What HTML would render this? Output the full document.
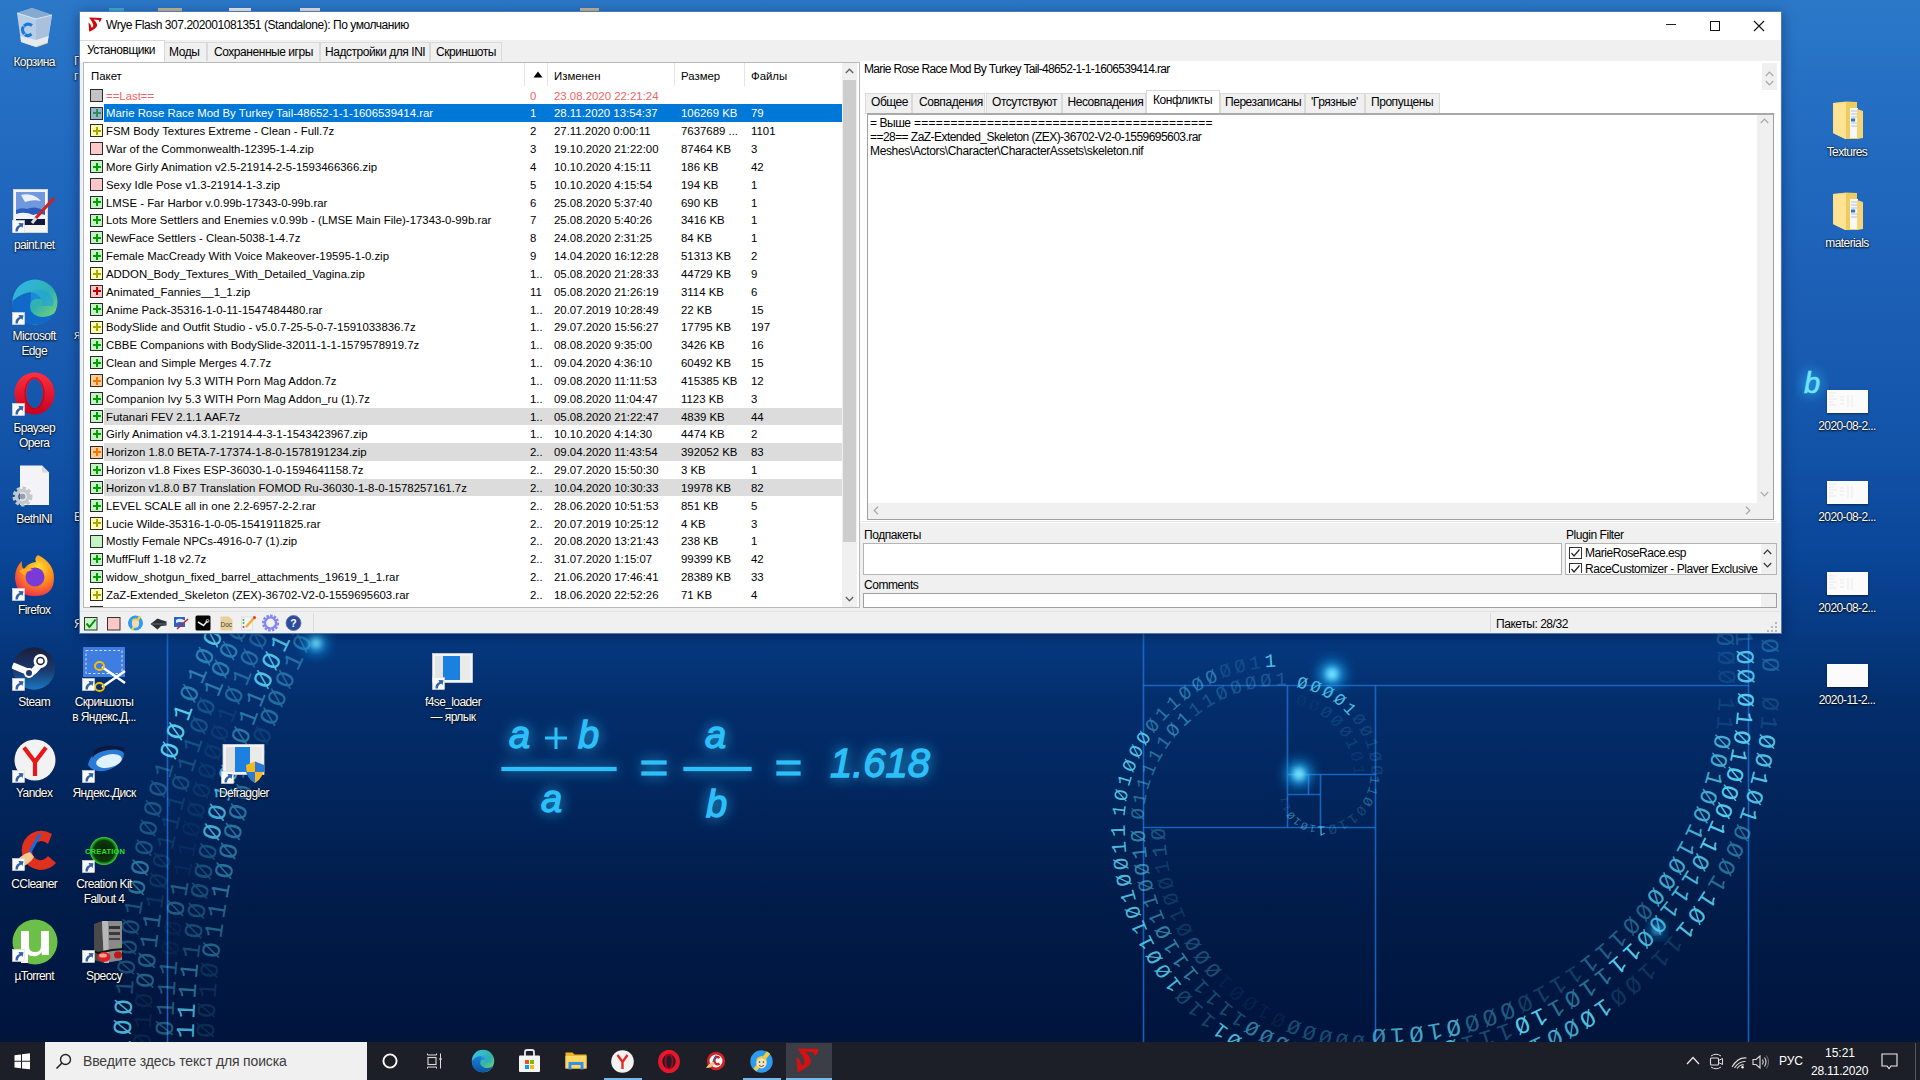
<!DOCTYPE html><html><head><meta charset="utf-8"><style>
*{margin:0;padding:0;box-sizing:border-box}
html,body{width:1920px;height:1080px;overflow:hidden;font-family:"Liberation Sans",sans-serif;}
body{position:relative;background:#0a3a8a;}
.a{position:absolute}
.t{position:absolute;white-space:pre;line-height:1}
#desk{position:absolute;left:0;top:0;width:1920px;height:1042px;
 background:linear-gradient(180deg,#2b78c9 0px,#216ac0 150px,#1b5fb5 300px,#1253a8 450px,#0a4699 550px,#073c86 620px,#032e6c 700px,#02255c 800px,#011c4a 900px,#00143c 1042px);}
.win{position:absolute;left:79px;top:11px;width:1702px;height:623px;background:#f0f0f0;border:1px solid #3c6fb0;}
.ui{font-size:12px;letter-spacing:-0.45px;color:#000}
.ls{font-size:11.4px;color:#000}
.lb{position:absolute;white-space:pre;line-height:1;font-size:12px;letter-spacing:-0.6px;color:#fff;text-align:center;text-shadow:0 0 2px rgba(0,0,0,0.9),0 1px 2px rgba(0,0,0,0.8)}
</style></head><body><div id="desk"></div><svg class="a" style="left:0;top:0" width="1920" height="1042" viewBox="0 0 1920 1042"><defs><filter id="gl" x="-50%" y="-50%" width="200%" height="200%"><feGaussianBlur stdDeviation="3"/></filter><filter id="gl2" x="-50%" y="-50%" width="200%" height="200%"><feGaussianBlur stdDeviation="7"/></filter></defs><path d="M167.5 630 L167.5 1042" stroke="#1f78e0" stroke-width="1.6" opacity="0.75"/><path d="M1143.5 630 L1143.5 1042" stroke="#1f78e0" stroke-width="1.6" opacity="0.75"/><path d="M1143 685.5 L1749 685.5" stroke="#1f78e0" stroke-width="1.6" opacity="0.75"/><path d="M1748.5 630 L1748.5 1042" stroke="#1f78e0" stroke-width="1.6" opacity="0.75"/><path d="M1375.5 685.5 L1375.5 1042" stroke="#1f78e0" stroke-width="1.6" opacity="0.75"/><path d="M1143 827.5 L1375.5 827.5" stroke="#1f78e0" stroke-width="1.6" opacity="0.75"/><path d="M1287.5 685.5 L1287.5 827.5" stroke="#1f78e0" stroke-width="1.6" opacity="0.75"/><path d="M1287.5 774.5 L1375.5 774.5" stroke="#1f78e0" stroke-width="1.6" opacity="0.75"/><path d="M1320.5 774.5 L1320.5 827.5" stroke="#1f78e0" stroke-width="1.6" opacity="0.75"/><path d="M1287.5 794.5 L1320.5 794.5" stroke="#1f78e0" stroke-width="1.6" opacity="0.75"/><path d="M1308.5 774.5 L1308.5 794.5" stroke="#1f78e0" stroke-width="1.6" opacity="0.75"/><path id="sp0" d="M122.0 1058.0 A1021.0 1021.0 0 0 1 1143.0 37.0" fill="none"/><text font-family="Liberation Mono" font-size="26" letter-spacing="4.5" fill="#5ad6f4" dy="8.6"><textPath href="#sp0" startOffset="3.0"><tspan fill-opacity="0.81">1</tspan><tspan fill-opacity="0.81">Ø</tspan><tspan fill-opacity="0.81">Ø</tspan><tspan fill-opacity="0.28">1</tspan><tspan fill-opacity="0.28">Ø</tspan><tspan fill-opacity="0.28">Ø</tspan><tspan fill-opacity="0.28">Ø</tspan><tspan fill-opacity="0.28">1</tspan><tspan fill-opacity="0.47">Ø</tspan><tspan fill-opacity="0.47">Ø</tspan><tspan fill-opacity="0.28">Ø</tspan><tspan fill-opacity="0.28">Ø</tspan><tspan fill-opacity="0.28">Ø</tspan><tspan fill-opacity="0.28">Ø</tspan><tspan fill-opacity="0.28">1</tspan><tspan fill-opacity="0.95">Ø</tspan><tspan fill-opacity="0.95">Ø</tspan><tspan fill-opacity="0.95">1</tspan><tspan fill-opacity="0.47">Ø</tspan><tspan fill-opacity="0.47">1</tspan><tspan fill-opacity="0.47">Ø</tspan><tspan fill-opacity="0.95">Ø</tspan><tspan fill-opacity="0.95">1</tspan><tspan fill-opacity="0.95">Ø</tspan><tspan fill-opacity="0.95">Ø</tspan><tspan fill-opacity="0.95">Ø</tspan><tspan fill-opacity="0.95">Ø</tspan><tspan fill-opacity="0.47">1</tspan><tspan fill-opacity="0.47">1</tspan><tspan fill-opacity="0.47">1</tspan><tspan fill-opacity="0.47">1</tspan><tspan fill-opacity="0.47">1</tspan><tspan fill-opacity="0.47">1</tspan><tspan fill-opacity="0.95">Ø</tspan><tspan fill-opacity="0.95">Ø</tspan><tspan fill-opacity="0.95">1</tspan><tspan fill-opacity="0.28">1</tspan><tspan fill-opacity="0.28">1</tspan><tspan fill-opacity="0.28">1</tspan><tspan fill-opacity="0.28">Ø</tspan><tspan fill-opacity="0.28">Ø</tspan><tspan fill-opacity="0.28">Ø</tspan><tspan fill-opacity="0.28">1</tspan><tspan fill-opacity="0.28">Ø</tspan><tspan fill-opacity="0.28">1</tspan><tspan fill-opacity="0.28">1</tspan><tspan fill-opacity="0.95">1</tspan><tspan fill-opacity="0.95">1</tspan><tspan fill-opacity="0.19">1</tspan><tspan fill-opacity="0.19">1</tspan><tspan fill-opacity="0.19">Ø</tspan><tspan fill-opacity="0.19">Ø</tspan><tspan fill-opacity="0.81">Ø</tspan><tspan fill-opacity="0.81">Ø</tspan><tspan fill-opacity="0.81">1</tspan><tspan fill-opacity="0.81">1</tspan><tspan fill-opacity="0.81">1</tspan><tspan fill-opacity="0.19">1</tspan><tspan fill-opacity="0.19">Ø</tspan><tspan fill-opacity="0.19">1</tspan><tspan fill-opacity="0.19">1</tspan><tspan fill-opacity="0.19">Ø</tspan><tspan fill-opacity="0.28">1</tspan><tspan fill-opacity="0.28">Ø</tspan><tspan fill-opacity="0.95">Ø</tspan><tspan fill-opacity="0.95">Ø</tspan><tspan fill-opacity="0.95">1</tspan><tspan fill-opacity="0.95">1</tspan><tspan fill-opacity="0.47">Ø</tspan><tspan fill-opacity="0.47">1</tspan><tspan fill-opacity="0.47">1</tspan><tspan fill-opacity="0.47">Ø</tspan><tspan fill-opacity="0.47">1</tspan><tspan fill-opacity="0.47">1</tspan><tspan fill-opacity="0.47">1</tspan><tspan fill-opacity="0.47">1</tspan><tspan fill-opacity="0.19">Ø</tspan><tspan fill-opacity="0.19">Ø</tspan><tspan fill-opacity="0.19">Ø</tspan><tspan fill-opacity="0.19">Ø</tspan></textPath></text><path id="sp1" d="M142.0 1058.0 A1001.0 1001.0 0 0 1 1143.0 57.0" fill="none"/><text font-family="Liberation Mono" font-size="26" letter-spacing="4.5" fill="#5ad6f4" dy="8.6"><textPath href="#sp1" startOffset="9.6"><tspan fill-opacity="0.09">Ø</tspan><tspan fill-opacity="0.09">1</tspan><tspan fill-opacity="0.09">Ø</tspan><tspan fill-opacity="0.38">Ø</tspan><tspan fill-opacity="0.38">Ø</tspan><tspan fill-opacity="0.38">1</tspan><tspan fill-opacity="0.38">1</tspan><tspan fill-opacity="0.14">1</tspan><tspan fill-opacity="0.14">Ø</tspan><tspan fill-opacity="0.14">Ø</tspan><tspan fill-opacity="0.14">1</tspan><tspan fill-opacity="0.14">1</tspan><tspan fill-opacity="0.14">1</tspan><tspan fill-opacity="0.23">Ø</tspan><tspan fill-opacity="0.23">1</tspan><tspan fill-opacity="0.23">1</tspan><tspan fill-opacity="0.23">Ø</tspan><tspan fill-opacity="0.23">Ø</tspan><tspan fill-opacity="0.45">1</tspan><tspan fill-opacity="0.45">Ø</tspan><tspan fill-opacity="0.45">Ø</tspan><tspan fill-opacity="0.38">Ø</tspan><tspan fill-opacity="0.38">Ø</tspan><tspan fill-opacity="0.38">Ø</tspan><tspan fill-opacity="0.38">Ø</tspan><tspan fill-opacity="0.38">Ø</tspan><tspan fill-opacity="0.38">1</tspan><tspan fill-opacity="0.14">Ø</tspan><tspan fill-opacity="0.14">Ø</tspan><tspan fill-opacity="0.14">Ø</tspan><tspan fill-opacity="0.14">1</tspan><tspan fill-opacity="0.14">1</tspan><tspan fill-opacity="0.14">1</tspan><tspan fill-opacity="0.14">1</tspan><tspan fill-opacity="0.45">1</tspan><tspan fill-opacity="0.45">1</tspan><tspan fill-opacity="0.23">1</tspan><tspan fill-opacity="0.23">Ø</tspan><tspan fill-opacity="0.23">Ø</tspan><tspan fill-opacity="0.23">Ø</tspan><tspan fill-opacity="0.23">1</tspan><tspan fill-opacity="0.09">1</tspan><tspan fill-opacity="0.09">Ø</tspan><tspan fill-opacity="0.09">Ø</tspan><tspan fill-opacity="0.09">Ø</tspan><tspan fill-opacity="0.14">Ø</tspan><tspan fill-opacity="0.14">Ø</tspan><tspan fill-opacity="0.14">1</tspan><tspan fill-opacity="0.14">Ø</tspan><tspan fill-opacity="0.09">1</tspan><tspan fill-opacity="0.09">Ø</tspan><tspan fill-opacity="0.09">1</tspan><tspan fill-opacity="0.09">Ø</tspan><tspan fill-opacity="0.14">1</tspan><tspan fill-opacity="0.14">Ø</tspan><tspan fill-opacity="0.14">Ø</tspan><tspan fill-opacity="0.14">Ø</tspan><tspan fill-opacity="0.14">1</tspan><tspan fill-opacity="0.14">Ø</tspan><tspan fill-opacity="0.45">1</tspan><tspan fill-opacity="0.45">1</tspan><tspan fill-opacity="0.45">Ø</tspan><tspan fill-opacity="0.45">Ø</tspan><tspan fill-opacity="0.45">1</tspan><tspan fill-opacity="0.45">1</tspan><tspan fill-opacity="0.38">1</tspan><tspan fill-opacity="0.38">1</tspan><tspan fill-opacity="0.38">1</tspan><tspan fill-opacity="0.38">Ø</tspan><tspan fill-opacity="0.38">Ø</tspan><tspan fill-opacity="0.45">Ø</tspan><tspan fill-opacity="0.45">1</tspan><tspan fill-opacity="0.45">Ø</tspan><tspan fill-opacity="0.45">1</tspan><tspan fill-opacity="0.45">Ø</tspan><tspan fill-opacity="0.23">Ø</tspan><tspan fill-opacity="0.23">Ø</tspan><tspan fill-opacity="0.23">1</tspan><tspan fill-opacity="0.23">Ø</tspan></textPath></text><path id="sp2" d="M164.0 1058.0 A979.0 979.0 0 0 1 1143.0 79.0" fill="none"/><text font-family="Liberation Mono" font-size="26" letter-spacing="4.5" fill="#5ad6f4" dy="8.6"><textPath href="#sp2" startOffset="1.9"><tspan fill-opacity="0.35">1</tspan><tspan fill-opacity="0.35">Ø</tspan><tspan fill-opacity="0.35">1</tspan><tspan fill-opacity="0.35">1</tspan><tspan fill-opacity="0.35">1</tspan><tspan fill-opacity="0.07">Ø</tspan><tspan fill-opacity="0.07">Ø</tspan><tspan fill-opacity="0.35">Ø</tspan><tspan fill-opacity="0.35">1</tspan><tspan fill-opacity="0.07">1</tspan><tspan fill-opacity="0.07">1</tspan><tspan fill-opacity="0.07">Ø</tspan><tspan fill-opacity="0.10">Ø</tspan><tspan fill-opacity="0.10">Ø</tspan><tspan fill-opacity="0.10">Ø</tspan><tspan fill-opacity="0.10">Ø</tspan><tspan fill-opacity="0.10">Ø</tspan><tspan fill-opacity="0.10">1</tspan><tspan fill-opacity="0.35">Ø</tspan><tspan fill-opacity="0.35">1</tspan><tspan fill-opacity="0.35">Ø</tspan><tspan fill-opacity="0.30">Ø</tspan><tspan fill-opacity="0.30">1</tspan><tspan fill-opacity="0.30">1</tspan><tspan fill-opacity="0.30">1</tspan><tspan fill-opacity="0.30">Ø</tspan><tspan fill-opacity="0.30">Ø</tspan><tspan fill-opacity="0.07">1</tspan><tspan fill-opacity="0.07">1</tspan><tspan fill-opacity="0.07">Ø</tspan><tspan fill-opacity="0.07">Ø</tspan><tspan fill-opacity="0.10">Ø</tspan><tspan fill-opacity="0.10">1</tspan><tspan fill-opacity="0.10">Ø</tspan><tspan fill-opacity="0.10">Ø</tspan><tspan fill-opacity="0.10">Ø</tspan><tspan fill-opacity="0.10">Ø</tspan><tspan fill-opacity="0.35">Ø</tspan><tspan fill-opacity="0.35">Ø</tspan><tspan fill-opacity="0.35">1</tspan><tspan fill-opacity="0.35">1</tspan><tspan fill-opacity="0.35">Ø</tspan><tspan fill-opacity="0.10">Ø</tspan><tspan fill-opacity="0.10">Ø</tspan><tspan fill-opacity="0.30">Ø</tspan><tspan fill-opacity="0.30">1</tspan><tspan fill-opacity="0.10">Ø</tspan><tspan fill-opacity="0.10">1</tspan><tspan fill-opacity="0.30">Ø</tspan><tspan fill-opacity="0.30">1</tspan><tspan fill-opacity="0.30">1</tspan><tspan fill-opacity="0.30">1</tspan><tspan fill-opacity="0.30">Ø</tspan><tspan fill-opacity="0.30">1</tspan><tspan fill-opacity="0.10">1</tspan><tspan fill-opacity="0.10">Ø</tspan><tspan fill-opacity="0.10">1</tspan><tspan fill-opacity="0.35">1</tspan><tspan fill-opacity="0.35">1</tspan><tspan fill-opacity="0.35">Ø</tspan><tspan fill-opacity="0.35">Ø</tspan><tspan fill-opacity="0.35">1</tspan><tspan fill-opacity="0.35">1</tspan><tspan fill-opacity="0.35">Ø</tspan><tspan fill-opacity="0.35">Ø</tspan><tspan fill-opacity="0.07">Ø</tspan><tspan fill-opacity="0.07">1</tspan><tspan fill-opacity="0.07">Ø</tspan><tspan fill-opacity="0.07">1</tspan><tspan fill-opacity="0.35">1</tspan><tspan fill-opacity="0.35">1</tspan><tspan fill-opacity="0.35">Ø</tspan><tspan fill-opacity="0.35">1</tspan><tspan fill-opacity="0.35">1</tspan><tspan fill-opacity="0.30">Ø</tspan><tspan fill-opacity="0.30">1</tspan><tspan fill-opacity="0.30">1</tspan></textPath></text><path id="sp3" d="M185.0 1058.0 A958.0 958.0 0 0 1 1143.0 100.0" fill="none"/><text font-family="Liberation Mono" font-size="26" letter-spacing="4.5" fill="#5ad6f4" dy="8.6"><textPath href="#sp3" startOffset="19.5"><tspan fill-opacity="0.77">1</tspan><tspan fill-opacity="0.77">1</tspan><tspan fill-opacity="0.45">1</tspan><tspan fill-opacity="0.45">1</tspan><tspan fill-opacity="0.27">1</tspan><tspan fill-opacity="0.27">Ø</tspan><tspan fill-opacity="0.27">Ø</tspan><tspan fill-opacity="0.27">Ø</tspan><tspan fill-opacity="0.27">Ø</tspan><tspan fill-opacity="0.27">Ø</tspan><tspan fill-opacity="0.77">Ø</tspan><tspan fill-opacity="0.77">Ø</tspan><tspan fill-opacity="0.77">1</tspan><tspan fill-opacity="0.77">Ø</tspan><tspan fill-opacity="0.45">1</tspan><tspan fill-opacity="0.45">Ø</tspan><tspan fill-opacity="0.45">1</tspan><tspan fill-opacity="0.45">1</tspan><tspan fill-opacity="0.90">Ø</tspan><tspan fill-opacity="0.90">Ø</tspan><tspan fill-opacity="0.90">1</tspan><tspan fill-opacity="0.90">Ø</tspan><tspan fill-opacity="0.77">Ø</tspan><tspan fill-opacity="0.77">1</tspan><tspan fill-opacity="0.90">Ø</tspan><tspan fill-opacity="0.90">Ø</tspan><tspan fill-opacity="0.90">1</tspan><tspan fill-opacity="0.90">Ø</tspan><tspan fill-opacity="0.90">1</tspan><tspan fill-opacity="0.90">Ø</tspan><tspan fill-opacity="0.77">1</tspan><tspan fill-opacity="0.77">1</tspan><tspan fill-opacity="0.77">Ø</tspan><tspan fill-opacity="0.77">Ø</tspan><tspan fill-opacity="0.77">Ø</tspan><tspan fill-opacity="0.77">Ø</tspan><tspan fill-opacity="0.90">Ø</tspan><tspan fill-opacity="0.90">Ø</tspan><tspan fill-opacity="0.90">Ø</tspan><tspan fill-opacity="0.90">1</tspan><tspan fill-opacity="0.18">Ø</tspan><tspan fill-opacity="0.18">1</tspan><tspan fill-opacity="0.18">1</tspan><tspan fill-opacity="0.18">Ø</tspan><tspan fill-opacity="0.77">Ø</tspan><tspan fill-opacity="0.77">1</tspan><tspan fill-opacity="0.77">Ø</tspan><tspan fill-opacity="0.77">Ø</tspan><tspan fill-opacity="0.90">Ø</tspan><tspan fill-opacity="0.90">1</tspan><tspan fill-opacity="0.90">Ø</tspan><tspan fill-opacity="0.90">1</tspan><tspan fill-opacity="0.90">Ø</tspan><tspan fill-opacity="0.90">1</tspan><tspan fill-opacity="0.18">1</tspan><tspan fill-opacity="0.18">1</tspan><tspan fill-opacity="0.18">Ø</tspan><tspan fill-opacity="0.18">Ø</tspan><tspan fill-opacity="0.18">1</tspan><tspan fill-opacity="0.90">1</tspan><tspan fill-opacity="0.90">1</tspan><tspan fill-opacity="0.90">Ø</tspan><tspan fill-opacity="0.90">Ø</tspan><tspan fill-opacity="0.90">1</tspan><tspan fill-opacity="0.45">Ø</tspan><tspan fill-opacity="0.45">Ø</tspan><tspan fill-opacity="0.45">1</tspan><tspan fill-opacity="0.27">Ø</tspan><tspan fill-opacity="0.27">1</tspan><tspan fill-opacity="0.27">Ø</tspan><tspan fill-opacity="0.27">1</tspan><tspan fill-opacity="0.90">1</tspan><tspan fill-opacity="0.90">1</tspan><tspan fill-opacity="0.90">Ø</tspan><tspan fill-opacity="0.77">1</tspan></textPath></text><path id="sp4" d="M205.0 1058.0 A938.0 938.0 0 0 1 1143.0 120.0" fill="none"/><text font-family="Liberation Mono" font-size="26" letter-spacing="4.5" fill="#5ad6f4" dy="8.6"><textPath href="#sp4" startOffset="20.0"><tspan fill-opacity="0.14">Ø</tspan><tspan fill-opacity="0.14">Ø</tspan><tspan fill-opacity="0.14">1</tspan><tspan fill-opacity="0.14">Ø</tspan><tspan fill-opacity="0.38">Ø</tspan><tspan fill-opacity="0.38">1</tspan><tspan fill-opacity="0.38">1</tspan><tspan fill-opacity="0.45">1</tspan><tspan fill-opacity="0.45">Ø</tspan><tspan fill-opacity="0.45">Ø</tspan><tspan fill-opacity="0.45">Ø</tspan><tspan fill-opacity="0.45">Ø</tspan><tspan fill-opacity="0.38">Ø</tspan><tspan fill-opacity="0.38">1</tspan><tspan fill-opacity="0.14">1</tspan><tspan fill-opacity="0.14">Ø</tspan><tspan fill-opacity="0.38">Ø</tspan><tspan fill-opacity="0.38">Ø</tspan><tspan fill-opacity="0.38">Ø</tspan><tspan fill-opacity="0.38">1</tspan><tspan fill-opacity="0.38">Ø</tspan><tspan fill-opacity="0.38">1</tspan><tspan fill-opacity="0.38">Ø</tspan><tspan fill-opacity="0.38">Ø</tspan><tspan fill-opacity="0.38">1</tspan><tspan fill-opacity="0.09">Ø</tspan><tspan fill-opacity="0.09">Ø</tspan><tspan fill-opacity="0.09">Ø</tspan><tspan fill-opacity="0.09">Ø</tspan><tspan fill-opacity="0.09">Ø</tspan><tspan fill-opacity="0.09">Ø</tspan><tspan fill-opacity="0.45">Ø</tspan><tspan fill-opacity="0.45">1</tspan><tspan fill-opacity="0.45">1</tspan><tspan fill-opacity="0.45">Ø</tspan><tspan fill-opacity="0.09">Ø</tspan><tspan fill-opacity="0.09">1</tspan><tspan fill-opacity="0.38">1</tspan><tspan fill-opacity="0.38">Ø</tspan><tspan fill-opacity="0.09">Ø</tspan><tspan fill-opacity="0.09">Ø</tspan><tspan fill-opacity="0.09">1</tspan><tspan fill-opacity="0.09">1</tspan><tspan fill-opacity="0.09">Ø</tspan><tspan fill-opacity="0.09">1</tspan><tspan fill-opacity="0.45">Ø</tspan><tspan fill-opacity="0.45">1</tspan><tspan fill-opacity="0.45">1</tspan><tspan fill-opacity="0.23">1</tspan><tspan fill-opacity="0.23">1</tspan><tspan fill-opacity="0.45">Ø</tspan><tspan fill-opacity="0.45">Ø</tspan><tspan fill-opacity="0.45">Ø</tspan><tspan fill-opacity="0.45">1</tspan><tspan fill-opacity="0.45">1</tspan><tspan fill-opacity="0.45">1</tspan><tspan fill-opacity="0.14">Ø</tspan><tspan fill-opacity="0.14">Ø</tspan><tspan fill-opacity="0.14">1</tspan><tspan fill-opacity="0.14">Ø</tspan><tspan fill-opacity="0.14">1</tspan><tspan fill-opacity="0.14">1</tspan><tspan fill-opacity="0.09">Ø</tspan><tspan fill-opacity="0.09">1</tspan><tspan fill-opacity="0.38">1</tspan><tspan fill-opacity="0.38">1</tspan><tspan fill-opacity="0.38">1</tspan><tspan fill-opacity="0.38">1</tspan><tspan fill-opacity="0.38">Ø</tspan><tspan fill-opacity="0.38">Ø</tspan><tspan fill-opacity="0.38">1</tspan><tspan fill-opacity="0.38">Ø</tspan><tspan fill-opacity="0.38">Ø</tspan><tspan fill-opacity="0.38">1</tspan></textPath></text><path id="sp5" d="M1143.0 57.0 A628.0 628.0 0 0 1 1771.0 685.0" fill="none"/><text font-family="Liberation Mono" font-size="25" letter-spacing="4" fill="#5ad6f4" dy="8.2"><textPath href="#sp5" startOffset="7.9"><tspan fill-opacity="0.47">Ø</tspan><tspan fill-opacity="0.47">Ø</tspan><tspan fill-opacity="0.47">Ø</tspan><tspan fill-opacity="0.95">1</tspan><tspan fill-opacity="0.95">1</tspan><tspan fill-opacity="0.95">Ø</tspan><tspan fill-opacity="0.95">1</tspan><tspan fill-opacity="0.95">Ø</tspan><tspan fill-opacity="0.95">1</tspan><tspan fill-opacity="0.95">1</tspan><tspan fill-opacity="0.95">1</tspan><tspan fill-opacity="0.95">Ø</tspan><tspan fill-opacity="0.95">Ø</tspan><tspan fill-opacity="0.95">Ø</tspan><tspan fill-opacity="0.47">1</tspan><tspan fill-opacity="0.47">1</tspan><tspan fill-opacity="0.47">Ø</tspan><tspan fill-opacity="0.47">1</tspan><tspan fill-opacity="0.47">1</tspan><tspan fill-opacity="0.47">Ø</tspan><tspan fill-opacity="0.47">1</tspan><tspan fill-opacity="0.47">Ø</tspan><tspan fill-opacity="0.47">1</tspan><tspan fill-opacity="0.81">Ø</tspan><tspan fill-opacity="0.81">Ø</tspan><tspan fill-opacity="0.81">Ø</tspan><tspan fill-opacity="0.81">1</tspan><tspan fill-opacity="0.81">1</tspan><tspan fill-opacity="0.81">1</tspan><tspan fill-opacity="0.81">1</tspan><tspan fill-opacity="0.28">1</tspan><tspan fill-opacity="0.28">1</tspan><tspan fill-opacity="0.81">1</tspan><tspan fill-opacity="0.81">Ø</tspan><tspan fill-opacity="0.95">Ø</tspan><tspan fill-opacity="0.95">Ø</tspan><tspan fill-opacity="0.95">1</tspan><tspan fill-opacity="0.95">1</tspan><tspan fill-opacity="0.28">Ø</tspan><tspan fill-opacity="0.28">1</tspan><tspan fill-opacity="0.28">1</tspan><tspan fill-opacity="0.28">Ø</tspan><tspan fill-opacity="0.19">Ø</tspan><tspan fill-opacity="0.19">Ø</tspan><tspan fill-opacity="0.19">Ø</tspan><tspan fill-opacity="0.19">1</tspan><tspan fill-opacity="0.19">1</tspan><tspan fill-opacity="0.28">1</tspan><tspan fill-opacity="0.28">1</tspan><tspan fill-opacity="0.28">Ø</tspan><tspan fill-opacity="0.28">Ø</tspan><tspan fill-opacity="0.28">1</tspan></textPath></text><path id="sp6" d="M1143.0 82.0 A603.0 603.0 0 0 1 1746.0 685.0" fill="none"/><text font-family="Liberation Mono" font-size="25" letter-spacing="4" fill="#5ad6f4" dy="8.2"><textPath href="#sp6" startOffset="17.9"><tspan fill-opacity="0.77">1</tspan><tspan fill-opacity="0.77">1</tspan><tspan fill-opacity="0.77">1</tspan><tspan fill-opacity="0.77">Ø</tspan><tspan fill-opacity="0.77">1</tspan><tspan fill-opacity="0.77">Ø</tspan><tspan fill-opacity="0.77">Ø</tspan><tspan fill-opacity="0.77">Ø</tspan><tspan fill-opacity="0.77">Ø</tspan><tspan fill-opacity="0.90">1</tspan><tspan fill-opacity="0.90">Ø</tspan><tspan fill-opacity="0.90">1</tspan><tspan fill-opacity="0.90">1</tspan><tspan fill-opacity="0.90">1</tspan><tspan fill-opacity="0.90">1</tspan><tspan fill-opacity="0.90">Ø</tspan><tspan fill-opacity="0.90">Ø</tspan><tspan fill-opacity="0.90">Ø</tspan><tspan fill-opacity="0.90">Ø</tspan><tspan fill-opacity="0.90">1</tspan><tspan fill-opacity="0.90">Ø</tspan><tspan fill-opacity="0.77">1</tspan><tspan fill-opacity="0.77">1</tspan><tspan fill-opacity="0.77">Ø</tspan><tspan fill-opacity="0.90">1</tspan><tspan fill-opacity="0.90">1</tspan><tspan fill-opacity="0.90">Ø</tspan><tspan fill-opacity="0.90">1</tspan><tspan fill-opacity="0.90">1</tspan><tspan fill-opacity="0.77">1</tspan><tspan fill-opacity="0.77">1</tspan><tspan fill-opacity="0.27">Ø</tspan><tspan fill-opacity="0.27">Ø</tspan><tspan fill-opacity="0.27">Ø</tspan><tspan fill-opacity="0.27">1</tspan><tspan fill-opacity="0.90">1</tspan><tspan fill-opacity="0.90">1</tspan><tspan fill-opacity="0.90">1</tspan><tspan fill-opacity="0.90">1</tspan><tspan fill-opacity="0.90">Ø</tspan><tspan fill-opacity="0.90">1</tspan><tspan fill-opacity="0.90">1</tspan><tspan fill-opacity="0.27">Ø</tspan><tspan fill-opacity="0.27">Ø</tspan><tspan fill-opacity="0.27">1</tspan><tspan fill-opacity="0.27">1</tspan><tspan fill-opacity="0.27">1</tspan><tspan fill-opacity="0.90">Ø</tspan><tspan fill-opacity="0.90">Ø</tspan><tspan fill-opacity="0.90">Ø</tspan></textPath></text><path id="sp7" d="M1143.0 101.0 A584.0 584.0 0 0 1 1727.0 685.0" fill="none"/><text font-family="Liberation Mono" font-size="25" letter-spacing="4" fill="#5ad6f4" dy="8.2"><textPath href="#sp7" startOffset="7.9"><tspan fill-opacity="0.10">Ø</tspan><tspan fill-opacity="0.10">Ø</tspan><tspan fill-opacity="0.10">Ø</tspan><tspan fill-opacity="0.10">Ø</tspan><tspan fill-opacity="0.10">Ø</tspan><tspan fill-opacity="0.15">1</tspan><tspan fill-opacity="0.15">Ø</tspan><tspan fill-opacity="0.10">1</tspan><tspan fill-opacity="0.10">Ø</tspan><tspan fill-opacity="0.10">Ø</tspan><tspan fill-opacity="0.10">Ø</tspan><tspan fill-opacity="0.42">Ø</tspan><tspan fill-opacity="0.42">1</tspan><tspan fill-opacity="0.42">1</tspan><tspan fill-opacity="0.42">Ø</tspan><tspan fill-opacity="0.42">Ø</tspan><tspan fill-opacity="0.42">Ø</tspan><tspan fill-opacity="0.15">1</tspan><tspan fill-opacity="0.15">1</tspan><tspan fill-opacity="0.15">1</tspan><tspan fill-opacity="0.15">Ø</tspan><tspan fill-opacity="0.25">Ø</tspan><tspan fill-opacity="0.25">Ø</tspan><tspan fill-opacity="0.25">Ø</tspan><tspan fill-opacity="0.25">1</tspan><tspan fill-opacity="0.25">1</tspan><tspan fill-opacity="0.25">Ø</tspan><tspan fill-opacity="0.50">1</tspan><tspan fill-opacity="0.50">1</tspan><tspan fill-opacity="0.50">Ø</tspan><tspan fill-opacity="0.42">1</tspan><tspan fill-opacity="0.42">1</tspan><tspan fill-opacity="0.42">Ø</tspan><tspan fill-opacity="0.25">1</tspan><tspan fill-opacity="0.25">1</tspan><tspan fill-opacity="0.42">Ø</tspan><tspan fill-opacity="0.42">Ø</tspan><tspan fill-opacity="0.42">1</tspan><tspan fill-opacity="0.42">Ø</tspan><tspan fill-opacity="0.42">Ø</tspan><tspan fill-opacity="0.25">1</tspan><tspan fill-opacity="0.25">Ø</tspan><tspan fill-opacity="0.25">Ø</tspan><tspan fill-opacity="0.25">1</tspan><tspan fill-opacity="0.25">1</tspan><tspan fill-opacity="0.25">Ø</tspan><tspan fill-opacity="0.15">Ø</tspan><tspan fill-opacity="0.15">Ø</tspan><tspan fill-opacity="0.15">1</tspan></textPath></text><path id="sp8" d="M1771.0 685.0 A396.0 396.0 0 0 1 1375.0 1081.0" fill="none"/><text font-family="Liberation Mono" font-size="24" letter-spacing="4.5" fill="#5ad6f4" dy="7.9"><textPath href="#sp8" startOffset="11.9"><tspan fill-opacity="0.18">Ø</tspan><tspan fill-opacity="0.18">1</tspan><tspan fill-opacity="0.90">Ø</tspan><tspan fill-opacity="0.90">Ø</tspan><tspan fill-opacity="0.90">1</tspan><tspan fill-opacity="0.90">Ø</tspan><tspan fill-opacity="0.90">1</tspan><tspan fill-opacity="0.45">Ø</tspan><tspan fill-opacity="0.45">Ø</tspan><tspan fill-opacity="0.45">Ø</tspan><tspan fill-opacity="0.45">1</tspan><tspan fill-opacity="0.90">1</tspan><tspan fill-opacity="0.90">Ø</tspan><tspan fill-opacity="0.90">1</tspan><tspan fill-opacity="0.18">1</tspan><tspan fill-opacity="0.18">1</tspan><tspan fill-opacity="0.18">1</tspan><tspan fill-opacity="0.18">Ø</tspan><tspan fill-opacity="0.18">Ø</tspan><tspan fill-opacity="0.90">1</tspan><tspan fill-opacity="0.90">Ø</tspan><tspan fill-opacity="0.77">Ø</tspan><tspan fill-opacity="0.77">Ø</tspan><tspan fill-opacity="0.77">1</tspan><tspan fill-opacity="0.77">1</tspan><tspan fill-opacity="0.77">1</tspan><tspan fill-opacity="0.45">Ø</tspan><tspan fill-opacity="0.45">1</tspan><tspan fill-opacity="0.90">1</tspan><tspan fill-opacity="0.90">Ø</tspan><tspan fill-opacity="0.90">1</tspan><tspan fill-opacity="0.90">1</tspan><tspan fill-opacity="0.18">Ø</tspan></textPath></text><path id="sp9" d="M1746.0 685.0 A371.0 371.0 0 0 1 1375.0 1056.0" fill="none"/><text font-family="Liberation Mono" font-size="24" letter-spacing="4.5" fill="#5ad6f4" dy="7.9"><textPath href="#sp9" startOffset="7.7"><tspan fill-opacity="0.95">Ø</tspan><tspan fill-opacity="0.95">1</tspan><tspan fill-opacity="0.95">Ø</tspan><tspan fill-opacity="0.95">1</tspan><tspan fill-opacity="0.95">Ø</tspan><tspan fill-opacity="0.95">Ø</tspan><tspan fill-opacity="0.95">Ø</tspan><tspan fill-opacity="0.95">1</tspan><tspan fill-opacity="0.95">1</tspan><tspan fill-opacity="0.81">Ø</tspan><tspan fill-opacity="0.81">1</tspan><tspan fill-opacity="0.81">1</tspan><tspan fill-opacity="0.81">1</tspan><tspan fill-opacity="0.81">Ø</tspan><tspan fill-opacity="0.81">Ø</tspan><tspan fill-opacity="0.95">1</tspan><tspan fill-opacity="0.95">1</tspan><tspan fill-opacity="0.47">1</tspan><tspan fill-opacity="0.47">1</tspan><tspan fill-opacity="0.47">Ø</tspan><tspan fill-opacity="0.47">1</tspan><tspan fill-opacity="0.95">1</tspan><tspan fill-opacity="0.95">Ø</tspan><tspan fill-opacity="0.28">1</tspan><tspan fill-opacity="0.28">1</tspan><tspan fill-opacity="0.28">1</tspan><tspan fill-opacity="0.81">Ø</tspan><tspan fill-opacity="0.81">Ø</tspan><tspan fill-opacity="0.81">1</tspan><tspan fill-opacity="0.81">Ø</tspan><tspan fill-opacity="0.81">Ø</tspan></textPath></text><path id="sp10" d="M1727.0 685.0 A352.0 352.0 0 0 1 1375.0 1037.0" fill="none"/><text font-family="Liberation Mono" font-size="24" letter-spacing="4.5" fill="#5ad6f4" dy="7.9"><textPath href="#sp10" startOffset="12.3"><tspan fill-opacity="0.15">1</tspan><tspan fill-opacity="0.15">1</tspan><tspan fill-opacity="0.75">Ø</tspan><tspan fill-opacity="0.75">Ø</tspan><tspan fill-opacity="0.75">1</tspan><tspan fill-opacity="0.75">Ø</tspan><tspan fill-opacity="0.75">Ø</tspan><tspan fill-opacity="0.75">1</tspan><tspan fill-opacity="0.75">1</tspan><tspan fill-opacity="0.75">Ø</tspan><tspan fill-opacity="0.75">Ø</tspan><tspan fill-opacity="0.75">Ø</tspan><tspan fill-opacity="0.38">Ø</tspan><tspan fill-opacity="0.38">Ø</tspan><tspan fill-opacity="0.38">1</tspan><tspan fill-opacity="0.38">1</tspan><tspan fill-opacity="0.38">1</tspan><tspan fill-opacity="0.22">1</tspan><tspan fill-opacity="0.22">1</tspan><tspan fill-opacity="0.22">1</tspan><tspan fill-opacity="0.22">Ø</tspan><tspan fill-opacity="0.38">Ø</tspan><tspan fill-opacity="0.38">Ø</tspan><tspan fill-opacity="0.38">Ø</tspan><tspan fill-opacity="0.75">Ø</tspan><tspan fill-opacity="0.75">1</tspan><tspan fill-opacity="0.75">Ø</tspan><tspan fill-opacity="0.75">1</tspan><tspan fill-opacity="0.64">Ø</tspan><tspan fill-opacity="0.64">Ø</tspan></textPath></text><path id="sp11" d="M1375.0 1083.0 A257.0 257.0 0 0 1 1118.0 826.0" fill="none"/><text font-family="Liberation Mono" font-size="21" letter-spacing="4" fill="#5ad6f4" dy="6.9"><textPath href="#sp11" startOffset="10.3"><tspan fill-opacity="0.85">Ø</tspan><tspan fill-opacity="0.85">1</tspan><tspan fill-opacity="0.85">1</tspan><tspan fill-opacity="0.85">Ø</tspan><tspan fill-opacity="0.85">1</tspan><tspan fill-opacity="0.85">Ø</tspan><tspan fill-opacity="0.85">Ø</tspan><tspan fill-opacity="0.85">Ø</tspan><tspan fill-opacity="0.85">Ø</tspan><tspan fill-opacity="0.85">1</tspan><tspan fill-opacity="0.26">1</tspan><tspan fill-opacity="0.26">1</tspan><tspan fill-opacity="0.26">Ø</tspan><tspan fill-opacity="0.85">1</tspan><tspan fill-opacity="0.85">Ø</tspan><tspan fill-opacity="0.85">Ø</tspan><tspan fill-opacity="0.85">1</tspan><tspan fill-opacity="0.85">1</tspan><tspan fill-opacity="0.85">Ø</tspan><tspan fill-opacity="0.85">1</tspan><tspan fill-opacity="0.85">Ø</tspan><tspan fill-opacity="0.85">Ø</tspan><tspan fill-opacity="0.85">1</tspan><tspan fill-opacity="0.85">1</tspan><tspan fill-opacity="0.85">Ø</tspan></textPath></text><path id="sp12" d="M1375.0 1063.0 A237.0 237.0 0 0 1 1138.0 826.0" fill="none"/><text font-family="Liberation Mono" font-size="21" letter-spacing="4" fill="#5ad6f4" dy="6.9"><textPath href="#sp12" startOffset="6.7"><tspan fill-opacity="0.55">Ø</tspan><tspan fill-opacity="0.55">1</tspan><tspan fill-opacity="0.55">1</tspan><tspan fill-opacity="0.55">Ø</tspan><tspan fill-opacity="0.55">1</tspan><tspan fill-opacity="0.55">Ø</tspan><tspan fill-opacity="0.55">Ø</tspan><tspan fill-opacity="0.55">Ø</tspan><tspan fill-opacity="0.28">1</tspan><tspan fill-opacity="0.28">1</tspan><tspan fill-opacity="0.28">1</tspan><tspan fill-opacity="0.28">1</tspan><tspan fill-opacity="0.55">1</tspan><tspan fill-opacity="0.55">1</tspan><tspan fill-opacity="0.55">1</tspan><tspan fill-opacity="0.55">Ø</tspan><tspan fill-opacity="0.47">1</tspan><tspan fill-opacity="0.47">1</tspan><tspan fill-opacity="0.47">Ø</tspan><tspan fill-opacity="0.55">Ø</tspan><tspan fill-opacity="0.55">1</tspan><tspan fill-opacity="0.55">Ø</tspan><tspan fill-opacity="0.55">Ø</tspan></textPath></text><path id="sp13" d="M1375.0 1043.0 A217.0 217.0 0 0 1 1158.0 826.0" fill="none"/><text font-family="Liberation Mono" font-size="21" letter-spacing="4" fill="#5ad6f4" dy="6.9"><textPath href="#sp13" startOffset="10.6"><tspan fill-opacity="0.30">Ø</tspan><tspan fill-opacity="0.30">Ø</tspan><tspan fill-opacity="0.30">Ø</tspan><tspan fill-opacity="0.30">Ø</tspan><tspan fill-opacity="0.30">Ø</tspan><tspan fill-opacity="0.07">Ø</tspan><tspan fill-opacity="0.07">1</tspan><tspan fill-opacity="0.07">Ø</tspan><tspan fill-opacity="0.07">Ø</tspan><tspan fill-opacity="0.07">1</tspan><tspan fill-opacity="0.30">Ø</tspan><tspan fill-opacity="0.30">Ø</tspan><tspan fill-opacity="0.30">Ø</tspan><tspan fill-opacity="0.17">Ø</tspan><tspan fill-opacity="0.17">1</tspan><tspan fill-opacity="0.17">Ø</tspan><tspan fill-opacity="0.17">Ø</tspan><tspan fill-opacity="0.17">1</tspan><tspan fill-opacity="0.30">1</tspan><tspan fill-opacity="0.30">Ø</tspan><tspan fill-opacity="0.07">Ø</tspan></textPath></text><path id="sp14" d="M1118.0 826.0 A166.0 166.0 0 0 1 1284.0 660.0" fill="none"/><text font-family="Liberation Mono" font-size="19" letter-spacing="4" fill="#5ad6f4" dy="6.3"><textPath href="#sp14" startOffset="10.0"><tspan fill-opacity="0.90">1</tspan><tspan fill-opacity="0.90">Ø</tspan><tspan fill-opacity="0.90">1</tspan><tspan fill-opacity="0.90">Ø</tspan><tspan fill-opacity="0.90">Ø</tspan><tspan fill-opacity="0.90">Ø</tspan><tspan fill-opacity="0.45">Ø</tspan><tspan fill-opacity="0.45">1</tspan><tspan fill-opacity="0.45">1</tspan><tspan fill-opacity="0.45">Ø</tspan><tspan fill-opacity="0.45">Ø</tspan><tspan fill-opacity="0.45">Ø</tspan><tspan fill-opacity="0.18">Ø</tspan><tspan fill-opacity="0.18">Ø</tspan><tspan fill-opacity="0.18">1</tspan><tspan fill-opacity="0.90">1</tspan><tspan fill-opacity="0.90">1</tspan></textPath></text><path id="sp15" d="M1137.0 826.0 A147.0 147.0 0 0 1 1284.0 679.0" fill="none"/><text font-family="Liberation Mono" font-size="19" letter-spacing="4" fill="#5ad6f4" dy="6.3"><textPath href="#sp15" startOffset="6.6"><tspan fill-opacity="0.42">Ø</tspan><tspan fill-opacity="0.42">1</tspan><tspan fill-opacity="0.42">1</tspan><tspan fill-opacity="0.42">1</tspan><tspan fill-opacity="0.42">1</tspan><tspan fill-opacity="0.42">1</tspan><tspan fill-opacity="0.50">Ø</tspan><tspan fill-opacity="0.50">1</tspan><tspan fill-opacity="0.25">1</tspan><tspan fill-opacity="0.25">1</tspan><tspan fill-opacity="0.25">Ø</tspan><tspan fill-opacity="0.25">Ø</tspan><tspan fill-opacity="0.25">Ø</tspan><tspan fill-opacity="0.25">Ø</tspan><tspan fill-opacity="0.25">1</tspan></textPath></text><path id="sp16" d="M1284.0 681.0 A93.0 93.0 0 0 1 1377.0 774.0" fill="none"/><text font-family="Liberation Mono" font-size="17" letter-spacing="3.5" fill="#5ad6f4" dy="5.6"><textPath href="#sp16" startOffset="13.6"><tspan fill-opacity="0.85">Ø</tspan><tspan fill-opacity="0.85">Ø</tspan><tspan fill-opacity="0.85">Ø</tspan><tspan fill-opacity="0.85">Ø</tspan><tspan fill-opacity="0.85">1</tspan><tspan fill-opacity="0.17">Ø</tspan><tspan fill-opacity="0.17">Ø</tspan><tspan fill-opacity="0.17">1</tspan><tspan fill-opacity="0.17">Ø</tspan><tspan fill-opacity="0.17">Ø</tspan><tspan fill-opacity="0.17">Ø</tspan></textPath></text><path id="sp17" d="M1284.0 699.0 A75.0 75.0 0 0 1 1359.0 774.0" fill="none"/><text font-family="Liberation Mono" font-size="17" letter-spacing="3.5" fill="#5ad6f4" dy="5.6"><textPath href="#sp17" startOffset="12.4"><tspan fill-opacity="0.06">Ø</tspan><tspan fill-opacity="0.06">Ø</tspan><tspan fill-opacity="0.15">Ø</tspan><tspan fill-opacity="0.15">Ø</tspan><tspan fill-opacity="0.15">Ø</tspan><tspan fill-opacity="0.15">1</tspan><tspan fill-opacity="0.09">Ø</tspan><tspan fill-opacity="0.09">1</tspan><tspan fill-opacity="0.09">1</tspan></textPath></text><path id="sp18" d="M1375.0 774.0 A57.0 57.0 0 0 1 1318.0 831.0" fill="none"/><text font-family="Liberation Mono" font-size="14" letter-spacing="3" fill="#5ad6f4" dy="4.6"><textPath href="#sp18" startOffset="1.8"><tspan fill-opacity="0.38">1</tspan><tspan fill-opacity="0.38">1</tspan><tspan fill-opacity="0.38">Ø</tspan><tspan fill-opacity="0.22">Ø</tspan><tspan fill-opacity="0.22">1</tspan><tspan fill-opacity="0.22">1</tspan><tspan fill-opacity="0.22">Ø</tspan><tspan fill-opacity="0.75">1</tspan></textPath></text><path id="sp19" d="M1318.0 829.0 A34.0 34.0 0 0 1 1284.0 795.0" fill="none"/><text font-family="Liberation Mono" font-size="11" letter-spacing="2" fill="#5ad6f4" dy="3.6"><textPath href="#sp19" startOffset="2.2"><tspan fill-opacity="0.51">1</tspan><tspan fill-opacity="0.51">Ø</tspan><tspan fill-opacity="0.51">1</tspan><tspan fill-opacity="0.51">Ø</tspan><tspan fill-opacity="0.18">1</tspan><tspan fill-opacity="0.18">1</tspan><tspan fill-opacity="0.18">Ø</tspan></textPath></text><circle cx="1332" cy="674" r="12" fill="#18b0ff" filter="url(#gl2)" opacity="0.95"/><circle cx="1332" cy="674" r="6.0" fill="#80e8ff" filter="url(#gl)"/><circle cx="1299" cy="774" r="12" fill="#18b0ff" filter="url(#gl2)" opacity="0.95"/><circle cx="1299" cy="774" r="6.0" fill="#80e8ff" filter="url(#gl)"/><circle cx="1657" cy="930" r="6" fill="#18b0ff" filter="url(#gl2)" opacity="0.95"/><circle cx="1657" cy="930" r="3.0" fill="#80e8ff" filter="url(#gl)"/><circle cx="316" cy="643" r="10" fill="#18b0ff" filter="url(#gl2)" opacity="0.95"/><circle cx="316" cy="643" r="5.0" fill="#80e8ff" filter="url(#gl)"/><g font-family="Liberation Sans" font-style="italic" fill="#2cc0fa" stroke="#2cc0fa" stroke-width="1.3"><g filter="url(#gl2)" opacity="0.8"><text x="509" y="748" font-size="38">a</text><rect x="545" y="736.5" width="22" height="3" stroke="none"/><rect x="554.5" y="727.5" width="3" height="21.5" stroke="none"/><text x="578" y="748" font-size="38">b</text><rect x="502" y="767.5" width="114" height="3" /><text x="541" y="812" font-size="38">a</text><rect x="642" y="761" width="24" height="3"/><rect x="642" y="772" width="24" height="3"/><text x="705" y="748" font-size="38">a</text><rect x="684" y="767.5" width="67" height="3"/><text x="706" y="817" font-size="38">b</text><rect x="777" y="761" width="23" height="3"/><rect x="777" y="772" width="23" height="3"/><text x="830" y="777" font-size="40">1.618</text></g><g><text x="509" y="748" font-size="38">a</text><rect x="545" y="736.5" width="22" height="3" stroke="none"/><rect x="554.5" y="727.5" width="3" height="21.5" stroke="none"/><text x="578" y="748" font-size="38">b</text><rect x="502" y="767.5" width="114" height="3" /><text x="541" y="812" font-size="38">a</text><rect x="642" y="761" width="24" height="3"/><rect x="642" y="772" width="24" height="3"/><text x="705" y="748" font-size="38">a</text><rect x="684" y="767.5" width="67" height="3"/><text x="706" y="817" font-size="38">b</text><rect x="777" y="761" width="23" height="3"/><rect x="777" y="772" width="23" height="3"/><text x="830" y="777" font-size="40">1.618</text></g></g><text x="1804" y="393" font-family="Liberation Sans" font-style="italic" font-size="29" fill="#30c0ff" stroke="#30c0ff" stroke-width="1.5" filter="url(#gl2)">b</text><text x="1804" y="393" font-family="Liberation Sans" font-style="italic" font-size="29" fill="#70e4ff" stroke="#70e4ff" stroke-width="0.6">b</text></svg><svg class="a" style="left:15px;top:6px" width="40" height="44" viewBox="0 0 40 44"><path d="M2 7 L17 2 L37 9 L32.5 37 L21 41 L6 36 Z" fill="#c2d6ea" opacity="0.92"/><path d="M21 13 L37 9 L32.5 37 L21 41 Z" fill="#a9c1dc"/><path d="M2 7 L17 2 L37 9 L21 13 Z" fill="#86a9d2"/><path d="M2 7 L21 13 L37 9" stroke="#e8f0f8" stroke-width="0.8" fill="none"/><path d="M5.5 30 L21 34 L33.5 30 L32.5 37 L21 41 L6 36 Z" fill="#e6eaee"/><path d="M21 41 L32.5 37" stroke="#d8b890" stroke-width="0.8"/><path d="M9 20 Q13 16.5 17 19.5 M9.5 28 Q6 24 8.5 20.5 M16.5 28 Q13 31 10 28.5" stroke="#1a78dc" stroke-width="3" fill="none"/></svg><div class="lb" style="left:-25.799999999999997px;width:120px;top:56.2px">Корзина</div><svg class="a" style="left:13px;top:189px" width="42" height="45" viewBox="0 0 42 45"><rect x="0.5" y="0.5" width="34" height="43" fill="#f6f4ee" stroke="#d8d4c8" stroke-width="1"/><rect x="3" y="3" width="29" height="33" fill="#2a5cc0"/><path d="M3 3 L32 3 L32 22 Q22 16 14 20 Q8 18 3 21 Z" fill="#6f98de"/><path d="M8 6 Q20 3 28 12 Q20 10 12 13 Z" fill="#e8f0fa"/><path d="M3 25 Q12 22 20 26 Q27 24 32 26 L32 30 L3 30 Z" fill="#f0f4fa"/><rect x="3" y="30" width="29" height="6" fill="#101840"/><path d="M22 30 L41 9" stroke="#d02020" stroke-width="3"/><path d="M19 34 L23 29" stroke="#ddd" stroke-width="3"/></svg><svg class="a" style="left:12px;top:220px" width="13" height="13" viewBox="0 0 13 13"><rect x="0.5" y="0.5" width="12" height="12" fill="#fafafa" stroke="#ddd" stroke-width="0.6"/><path d="M3.5 11.5 Q3 6.5 7.5 5 L6.5 3 L11.5 3.2 L10.5 8 L9.2 6.4 Q6.2 7.5 5.8 11.5 Z" fill="#2f62a8"/></svg><div class="lb" style="left:-25.799999999999997px;width:120px;top:238.9px">paint.net</div><svg class="a" style="left:12px;top:279px" width="46" height="46" viewBox="0 0 46 46"><defs><linearGradient id="de1" x1="0" y1="0" x2="1" y2="1"><stop offset="0" stop-color="#2fb8f0"/><stop offset="0.55" stop-color="#30b0b0"/><stop offset="1" stop-color="#8ee060"/></linearGradient></defs><circle cx="23" cy="23" r="22.5" fill="url(#de1)"/><path d="M0.5 23 Q0.5 45.5 23 45.5 Q37 45.5 44 33 Q35 40 25 37 Q16 33 18.5 24 Q21 18 29 20 Q24 11 14 14 Q3 18 0.5 23 Z" fill="#1068c8"/><path d="M18.5 24 Q21 18 29 20 Q32 24 28 27 L41 27 Q43 19 36 13 Q27 8 19 13 Z" fill="#22a0e0" opacity="0.6"/></svg><svg class="a" style="left:12px;top:312px" width="13" height="13" viewBox="0 0 13 13"><rect x="0.5" y="0.5" width="12" height="12" fill="#fafafa" stroke="#ddd" stroke-width="0.6"/><path d="M3.5 11.5 Q3 6.5 7.5 5 L6.5 3 L11.5 3.2 L10.5 8 L9.2 6.4 Q6.2 7.5 5.8 11.5 Z" fill="#2f62a8"/></svg><div class="lb" style="left:-25.799999999999997px;width:120px;top:330.2px">Microsoft</div><div class="lb" style="left:-25.799999999999997px;width:120px;top:345.2px">Edge</div><svg class="a" style="left:13px;top:371px" width="43" height="45" viewBox="0 0 43 45"><defs><linearGradient id="op1" x1="0" y1="0" x2="0" y2="1"><stop offset="0" stop-color="#ff3040"/><stop offset="1" stop-color="#c8001e"/></linearGradient></defs><path fill-rule="evenodd" d="M21.5 1.5 A20 21 0 1 1 21.4 1.5 Z M21.5 8 A8.2 14.5 0 1 0 21.6 8 Z" fill="url(#op1)"/><ellipse cx="21.5" cy="22.5" rx="9.5" ry="15.5" fill="none" stroke="#a8001a" stroke-width="1.4" opacity="0.6"/></svg><svg class="a" style="left:12px;top:403px" width="13" height="13" viewBox="0 0 13 13"><rect x="0.5" y="0.5" width="12" height="12" fill="#fafafa" stroke="#ddd" stroke-width="0.6"/><path d="M3.5 11.5 Q3 6.5 7.5 5 L6.5 3 L11.5 3.2 L10.5 8 L9.2 6.4 Q6.2 7.5 5.8 11.5 Z" fill="#2f62a8"/></svg><div class="lb" style="left:-25.799999999999997px;width:120px;top:421.6px">Браузер</div><div class="lb" style="left:-25.799999999999997px;width:120px;top:436.6px">Opera</div><svg class="a" style="left:12px;top:465px" width="38" height="43" viewBox="0 0 38 43"><path d="M8 0.5 L30 0.5 L37 7.5 L37 40 L8 40 Z" fill="#f4f4f6"/><path d="M30 0.5 L30 7.5 L37 7.5 Z" fill="#d8d8dc"/><circle cx="10.5" cy="31.5" r="7.5" fill="none" stroke="#c4c8cc" stroke-width="5" stroke-dasharray="3 2"/><circle cx="10.5" cy="31.5" r="6" fill="none" stroke="#c4c8cc" stroke-width="3.5"/><circle cx="10.5" cy="31.5" r="3" fill="#9aa0a8"/></svg><div class="lb" style="left:-25.799999999999997px;width:120px;top:512.9px">BethINI</div><svg class="a" style="left:14px;top:555px" width="41" height="42" viewBox="0 0 41 42"><defs><radialGradient id="ff1" cx="0.6" cy="0.3" r="0.8"><stop offset="0" stop-color="#ffe030"/><stop offset="0.5" stop-color="#ff8a1a"/><stop offset="1" stop-color="#e8205a"/></radialGradient></defs><path d="M20.5 41 Q2 41 1 23 Q1 12 8 6 Q7 12 10 14 Q14 8 22 7 Q20 3 24 0 Q40 8 40 23 Q40 41 20.5 41 Z" fill="url(#ff1)"/><circle cx="21" cy="22" r="9.5" fill="#7a3ad8"/><path d="M5 16 Q12 11 19 15 Q12 16 10 20 Z" fill="#ffb020"/></svg><svg class="a" style="left:12px;top:588px" width="13" height="13" viewBox="0 0 13 13"><rect x="0.5" y="0.5" width="12" height="12" fill="#fafafa" stroke="#ddd" stroke-width="0.6"/><path d="M3.5 11.5 Q3 6.5 7.5 5 L6.5 3 L11.5 3.2 L10.5 8 L9.2 6.4 Q6.2 7.5 5.8 11.5 Z" fill="#2f62a8"/></svg><div class="lb" style="left:-25.799999999999997px;width:120px;top:604.2px">Firefox</div><svg class="a" style="left:12px;top:647px" width="44" height="43" viewBox="0 0 44 43"><defs><linearGradient id="st1" x1="0" y1="0" x2="0" y2="1"><stop offset="0" stop-color="#1a1e3a"/><stop offset="0.55" stop-color="#1a3a70"/><stop offset="1" stop-color="#1a78c0"/></linearGradient></defs><circle cx="22" cy="21.5" r="21.2" fill="url(#st1)"/><path d="M0.5 18.5 L14 24 Q18 28 22 24 L30 15" stroke="#fff" stroke-width="6.5" fill="none"/><circle cx="28.5" cy="14" r="7" fill="#fff"/><circle cx="28.5" cy="14" r="4.3" fill="#1a2040"/><circle cx="28.5" cy="14" r="2.8" fill="#fff"/><circle cx="17" cy="26" r="5" fill="#fff"/><circle cx="17" cy="26" r="3" fill="#1a3a70"/></svg><svg class="a" style="left:12px;top:678px" width="13" height="13" viewBox="0 0 13 13"><rect x="0.5" y="0.5" width="12" height="12" fill="#fafafa" stroke="#ddd" stroke-width="0.6"/><path d="M3.5 11.5 Q3 6.5 7.5 5 L6.5 3 L11.5 3.2 L10.5 8 L9.2 6.4 Q6.2 7.5 5.8 11.5 Z" fill="#2f62a8"/></svg><div class="lb" style="left:-25.799999999999997px;width:120px;top:695.6px">Steam</div><svg class="a" style="left:14px;top:739px" width="42" height="42" viewBox="0 0 42 42"><circle cx="21" cy="21" r="20.5" fill="#f2f2f2"/><path d="M10 8.5 L21 23 L32 8.5 M21 23 L21 37" stroke="#e81818" stroke-width="4.2" fill="none"/></svg><svg class="a" style="left:12px;top:770px" width="13" height="13" viewBox="0 0 13 13"><rect x="0.5" y="0.5" width="12" height="12" fill="#fafafa" stroke="#ddd" stroke-width="0.6"/><path d="M3.5 11.5 Q3 6.5 7.5 5 L6.5 3 L11.5 3.2 L10.5 8 L9.2 6.4 Q6.2 7.5 5.8 11.5 Z" fill="#2f62a8"/></svg><div class="lb" style="left:-25.799999999999997px;width:120px;top:786.9px">Yandex</div><svg class="a" style="left:12px;top:830px" width="46" height="42" viewBox="0 0 46 42"><path d="M40 4 Q30 -2 20 3 Q8 10 10 24 Q13 38 28 40 Q38 40 44 33 L36 26 Q32 31 27 30 Q20 28 20 20 Q21 12 29 11 Q33 11 36 14 Z" fill="#e03020"/><path d="M0.5 37 Q8 24 18 22 L22 27 Q16 38 0.5 37 Z" fill="#f4c890"/><path d="M18 22 L28 4" stroke="#1a6ad8" stroke-width="3"/></svg><svg class="a" style="left:12px;top:858px" width="13" height="13" viewBox="0 0 13 13"><rect x="0.5" y="0.5" width="12" height="12" fill="#fafafa" stroke="#ddd" stroke-width="0.6"/><path d="M3.5 11.5 Q3 6.5 7.5 5 L6.5 3 L11.5 3.2 L10.5 8 L9.2 6.4 Q6.2 7.5 5.8 11.5 Z" fill="#2f62a8"/></svg><div class="lb" style="left:-25.799999999999997px;width:120px;top:878.3px">CCleaner</div><svg class="a" style="left:12px;top:919px" width="46" height="46" viewBox="0 0 46 46"><circle cx="23" cy="23" r="22.5" fill="#6cc04a"/><path d="M9 12 L17 12 L17 27 Q17 33 23 33 Q29 33 29 27 L29 12 L37 12 L37 36 L30 36 L29.5 33 Q27 38 20 37 Q17 37 16 35 L16 44 L9 44 Z" fill="#fff"/></svg><svg class="a" style="left:12px;top:949px" width="13" height="13" viewBox="0 0 13 13"><rect x="0.5" y="0.5" width="12" height="12" fill="#fafafa" stroke="#ddd" stroke-width="0.6"/><path d="M3.5 11.5 Q3 6.5 7.5 5 L6.5 3 L11.5 3.2 L10.5 8 L9.2 6.4 Q6.2 7.5 5.8 11.5 Z" fill="#2f62a8"/></svg><div class="lb" style="left:-25.799999999999997px;width:120px;top:969.6px">µTorrent</div><svg class="a" style="left:80px;top:647px" width="48" height="45" viewBox="0 0 48 45"><rect x="3" y="0" width="42" height="30" fill="#3f7ee0"/><rect x="6" y="3.5" width="36" height="23" fill="none" stroke="#cfe0ff" stroke-width="1" stroke-dasharray="2.5 2"/><path d="M22 20 L45 36 M22 40 L45 24" stroke="#fff" stroke-width="2.6"/><ellipse cx="19.5" cy="19" rx="4.5" ry="4" fill="none" stroke="#f4c000" stroke-width="2"/><ellipse cx="19.5" cy="40" rx="4.5" ry="4" fill="none" stroke="#f4c000" stroke-width="2"/></svg><svg class="a" style="left:82px;top:678px" width="13" height="13" viewBox="0 0 13 13"><rect x="0.5" y="0.5" width="12" height="12" fill="#fafafa" stroke="#ddd" stroke-width="0.6"/><path d="M3.5 11.5 Q3 6.5 7.5 5 L6.5 3 L11.5 3.2 L10.5 8 L9.2 6.4 Q6.2 7.5 5.8 11.5 Z" fill="#2f62a8"/></svg><div class="lb" style="left:44px;width:120px;top:695.6px">Скриншоты</div><div class="lb" style="left:44px;width:120px;top:710.6px">в Яндекс.Д...</div><svg class="a" style="left:84px;top:744px" width="41" height="32" viewBox="0 0 41 32"><path d="M4 21 Q6 8 24 4 Q38 2 40 9 Q40 20 24 26 Q10 30 4 21 Z" fill="#2a7ad8"/><path d="M10 6 Q22 -2 40 4 L40 9 Q36 4 24 6 Q12 8 8 14 Z" fill="#0a1a40"/><ellipse cx="25" cy="17" rx="13" ry="6.5" fill="#dff2ff" transform="rotate(-12 25 17)"/></svg><svg class="a" style="left:82px;top:770px" width="13" height="13" viewBox="0 0 13 13"><rect x="0.5" y="0.5" width="12" height="12" fill="#fafafa" stroke="#ddd" stroke-width="0.6"/><path d="M3.5 11.5 Q3 6.5 7.5 5 L6.5 3 L11.5 3.2 L10.5 8 L9.2 6.4 Q6.2 7.5 5.8 11.5 Z" fill="#2f62a8"/></svg><div class="lb" style="left:44px;width:120px;top:786.9px">Яндекс.Диск</div><svg class="a" style="left:81px;top:836px" width="46" height="30" viewBox="0 0 46 30"><defs><radialGradient id="ck1" cx="0.5" cy="0.5" r="0.5"><stop offset="0" stop-color="#0a2008"/><stop offset="0.75" stop-color="#0c3a0a"/><stop offset="1" stop-color="#30e030"/></radialGradient></defs><circle cx="23" cy="15" r="14" fill="url(#ck1)"/><text x="4" y="18" font-family="Liberation Sans" font-weight="bold" font-size="7.5" fill="#28e028" letter-spacing="0.2">CREATION</text></svg><svg class="a" style="left:82px;top:860px" width="13" height="13" viewBox="0 0 13 13"><rect x="0.5" y="0.5" width="12" height="12" fill="#fafafa" stroke="#ddd" stroke-width="0.6"/><path d="M3.5 11.5 Q3 6.5 7.5 5 L6.5 3 L11.5 3.2 L10.5 8 L9.2 6.4 Q6.2 7.5 5.8 11.5 Z" fill="#2f62a8"/></svg><div class="lb" style="left:44px;width:120px;top:878.3px">Creation Kit</div><div class="lb" style="left:44px;width:120px;top:893.3px">Fallout 4</div><svg class="a" style="left:82px;top:920px" width="44" height="46" viewBox="0 0 44 46"><path d="M12 4 L20 1 L40 1 L40 40 L22 43 L12 40 Z" fill="#4a4a4a"/><path d="M20 1 L40 1 L40 40 L22 43 Z" fill="#8a8a8a"/><path d="M20 1 L26 1 L27 43 L22 43 Z" fill="#b8b8b8"/><rect x="27" y="6" width="11" height="3" fill="#333"/><rect x="27" y="12" width="11" height="3" fill="#3a3a3a"/><rect x="27" y="18" width="11" height="2" fill="#444"/><circle cx="37" cy="25" r="1" fill="#3c3"/><path d="M0.5 33 Q8 28 16 33 L30 30 L42 29" stroke="#111" stroke-width="1.8" fill="none"/><ellipse cx="22" cy="37" rx="6.5" ry="5" fill="#e02020"/><ellipse cx="21" cy="35.5" rx="4" ry="2" fill="#f6a0a0"/><ellipse cx="36" cy="35" rx="4" ry="3.5" fill="#c01818"/></svg><svg class="a" style="left:82px;top:950px" width="13" height="13" viewBox="0 0 13 13"><rect x="0.5" y="0.5" width="12" height="12" fill="#fafafa" stroke="#ddd" stroke-width="0.6"/><path d="M3.5 11.5 Q3 6.5 7.5 5 L6.5 3 L11.5 3.2 L10.5 8 L9.2 6.4 Q6.2 7.5 5.8 11.5 Z" fill="#2f62a8"/></svg><div class="lb" style="left:44px;width:120px;top:969.6px">Speccy</div><svg class="a" style="left:222px;top:744px" width="44" height="40" viewBox="0 0 44 40"><rect x="1" y="0.5" width="41" height="30" fill="#f4f4f4" stroke="#d4d4d4" stroke-width="0.8"/><rect x="4" y="3" width="9" height="25" fill="#e0e0e0"/><rect x="13" y="3" width="15" height="25" fill="#1c80e0"/><rect x="28" y="3" width="12" height="25" fill="#eaeaea"/><path d="M24 21 L33 17.5 L42 21 Q42 34 33 39 Q24 34 24 21 Z" fill="#f4b820"/><path d="M33 17.5 L42 21 L42 28 L33 28 Z" fill="#2a78d8"/><path d="M24 28 L33 28 L33 39 Q26 35 24 28 Z" fill="#2a78d8"/></svg><svg class="a" style="left:221px;top:771px" width="13" height="13" viewBox="0 0 13 13"><rect x="0.5" y="0.5" width="12" height="12" fill="#fafafa" stroke="#ddd" stroke-width="0.6"/><path d="M3.5 11.5 Q3 6.5 7.5 5 L6.5 3 L11.5 3.2 L10.5 8 L9.2 6.4 Q6.2 7.5 5.8 11.5 Z" fill="#2f62a8"/></svg><div class="lb" style="left:184px;width:120px;top:786.9px">Defraggler</div><svg class="a" style="left:432px;top:653px" width="41" height="30" viewBox="0 0 41 30"><rect x="0.5" y="0.5" width="40" height="29" fill="#f4f4f4" stroke="#d4d4d4" stroke-width="0.8"/><rect x="3" y="3" width="8" height="24" fill="#e4e4e4"/><rect x="11" y="3" width="17" height="24" fill="#1c80e0"/><rect x="28" y="3" width="10" height="24" fill="#eaeaea"/></svg><svg class="a" style="left:432px;top:677px" width="13" height="13" viewBox="0 0 13 13"><rect x="0.5" y="0.5" width="12" height="12" fill="#fafafa" stroke="#ddd" stroke-width="0.6"/><path d="M3.5 11.5 Q3 6.5 7.5 5 L6.5 3 L11.5 3.2 L10.5 8 L9.2 6.4 Q6.2 7.5 5.8 11.5 Z" fill="#2f62a8"/></svg><div class="lb" style="left:393px;width:120px;top:695.6px">f4se_loader</div><div class="lb" style="left:393px;width:120px;top:710.6px">— ярлык</div><svg class="a" style="left:1832px;top:100.54000000000002px" width="32" height="40" viewBox="0 0 32 40"><path d="M1 2 L14 0.5 L25 1 L25 38 L13 38 L1 32 Z" fill="#f0cc60"/><path d="M14 1 L14 38 L1 32 L1 2 Z" fill="#ffe08a"/><rect x="18" y="7" width="8" height="30" fill="#f8f8f8"/><path d="M19 10 L25 10 M19 13 L25 13 M19 16 L25 16 M19 19 L24 19 M19 22 L25 22 M19 25 L25 25" stroke="#9ab" stroke-width="0.7"/><rect x="19" y="17.5" width="4" height="3" fill="#2a78c8"/><path d="M25 8 L31 10 L31 37 L25 38 Z" fill="#f4d474"/><path d="M3 4 L14 3 L14 38 L3 33 Z" fill="#ffe49a" opacity="0.7"/></svg><div class="lb" style="left:1787px;width:120px;top:145.5px">Textures</div><svg class="a" style="left:1832px;top:191.88px" width="32" height="40" viewBox="0 0 32 40"><path d="M1 2 L14 0.5 L25 1 L25 38 L13 38 L1 32 Z" fill="#f0cc60"/><path d="M14 1 L14 38 L1 32 L1 2 Z" fill="#ffe08a"/><rect x="18" y="7" width="8" height="30" fill="#f8f8f8"/><path d="M19 10 L25 10 M19 13 L25 13 M19 16 L25 16 M19 19 L24 19 M19 22 L25 22 M19 25 L25 25" stroke="#9ab" stroke-width="0.7"/><rect x="19" y="17.5" width="4" height="3" fill="#2a78c8"/><path d="M25 8 L31 10 L31 37 L25 38 Z" fill="#f4d474"/><path d="M3 4 L14 3 L14 38 L3 33 Z" fill="#ffe49a" opacity="0.7"/></svg><div class="lb" style="left:1787px;width:120px;top:236.9px">materials</div><div class="a" style="left:1827px;top:389.6px;width:41px;height:23px;background:#fbfbfb;box-shadow:0 1px 2px rgba(0,0,0,0.5)"></div><svg class="a" style="left:1828px;top:391px" width="38" height="19" viewBox="0 0 38 19"><path d="M1 2 L8 2 M1 5 L6 5 M1 8 L9 8 M1 11 L5 11 M1 14 L8 14 M12 6 L16 6 M12 9 L16 9 M12 13 L16 13 M20 4 L20 16 M24 4 L24 16" stroke="#e2e4ea" stroke-width="0.7"/></svg><div class="lb" style="left:1787px;width:120px;top:419.6px">2020-08-2...</div><div class="a" style="left:1827px;top:480.9px;width:41px;height:23px;background:#fbfbfb;box-shadow:0 1px 2px rgba(0,0,0,0.5)"></div><svg class="a" style="left:1828px;top:482px" width="38" height="19" viewBox="0 0 38 19"><path d="M1 2 L8 2 M1 5 L6 5 M1 8 L9 8 M1 11 L5 11 M1 14 L8 14 M12 6 L16 6 M12 9 L16 9 M12 13 L16 13 M20 4 L20 16 M24 4 L24 16" stroke="#e2e4ea" stroke-width="0.7"/></svg><div class="lb" style="left:1787px;width:120px;top:510.9px">2020-08-2...</div><div class="a" style="left:1827px;top:572.2px;width:41px;height:23px;background:#fbfbfb;box-shadow:0 1px 2px rgba(0,0,0,0.5)"></div><svg class="a" style="left:1828px;top:574px" width="38" height="19" viewBox="0 0 38 19"><path d="M1 2 L8 2 M1 5 L6 5 M1 8 L9 8 M1 11 L5 11 M1 14 L8 14 M12 6 L16 6 M12 9 L16 9 M12 13 L16 13 M20 4 L20 16 M24 4 L24 16" stroke="#e2e4ea" stroke-width="0.7"/></svg><div class="lb" style="left:1787px;width:120px;top:602.2px">2020-08-2...</div><div class="a" style="left:1827px;top:663.6px;width:41px;height:23px;background:#fbfbfb;box-shadow:0 1px 2px rgba(0,0,0,0.5)"></div><div class="lb" style="left:1787px;width:120px;top:693.6px">2020-11-2...</div><div class="a" style="left:109px;top:8px;width:15px;height:3px;background:#3ab0d0"></div><div class="a" style="left:158px;top:8px;width:24px;height:3px;background:#c8b890"></div><div class="a" style="left:229px;top:8px;width:22px;height:3px;background:#f0f0f0"></div><div class="a" style="left:300px;top:8px;width:20px;height:3px;background:#e8e8e8"></div><div class="a" style="left:580px;top:8px;width:19px;height:3px;background:#c8b890"></div><div class="lb" style="left:74px;top:54.7px;text-align:left">П</div><div class="lb" style="left:74px;top:69.7px;text-align:left">г</div><div class="lb" style="left:74px;top:328.7px;text-align:left">я</div><div class="lb" style="left:74px;top:511.4px;text-align:left">B</div><div class="lb" style="left:74px;top:617.7px;text-align:left">Я</div><div class="a" style="left:79px;top:11px;width:1703px;height:623px;background:#f0f0f0;border:1px solid #4a7cbc;box-shadow:0 2px 12px rgba(0,0,30,0.38)"></div><div class="a" style="left:80px;top:12px;width:1701px;height:28px;background:#fff"></div><svg class="a" style="left:84px;top:14px" width="24" height="22" viewBox="0 0 24 22"><path d="M5 3.6 L17.8 4 L16.8 6.8 L15.5 8.3 L14.7 6 L9.6 5.6 Q13.6 9.4 13.1 11.8 Q12.2 14.6 5.2 17.8 L4.5 8.6 L6.4 10.2 Q7.1 13.2 8.1 13.7 Q9.8 12.6 9.2 10.5 Q8.3 7.6 5 3.6 Z" fill="#cc0a0a"/></svg><div class="t ui" style="left:106px;top:19px;">Wrye Flash 307.202001081351 (Standalone): По умолчанию</div><div class="a" style="left:1666px;top:24px;width:10px;height:1px;background:#222"></div><div class="a" style="left:1710px;top:21px;width:10px;height:10px;border:1px solid #111"></div><svg class="a" style="left:1753px;top:20px" width="12" height="12" viewBox="0 0 12 12"><path d="M1 1 L11 11 M11 1 L1 11" stroke="#111" stroke-width="1.1"/></svg><div class="a" style="left:164px;top:42px;width:43px;height:19px;background:#f0f0f0;border:1px solid #dadada;border-bottom:none"></div><div class="t ui" style="left:169px;top:45.5px;">Моды</div><div class="a" style="left:207px;top:42px;width:112.5px;height:19px;background:#f0f0f0;border:1px solid #dadada;border-bottom:none"></div><div class="t ui" style="left:214px;top:45.5px;">Сохраненные игры</div><div class="a" style="left:319.5px;top:42px;width:110.0px;height:19px;background:#f0f0f0;border:1px solid #dadada;border-bottom:none"></div><div class="t ui" style="left:325px;top:45.5px;">Надстройки для INI</div><div class="a" style="left:429.5px;top:42px;width:72.5px;height:19px;background:#f0f0f0;border:1px solid #dadada;border-bottom:none"></div><div class="t ui" style="left:436px;top:45.5px;">Скриншоты</div><div class="a" style="left:80px;top:40px;width:84.5px;height:22px;background:#fff;border:1px solid #d9d9d9;border-bottom:none;border-left:none"></div><div class="t ui" style="left:87px;top:43.5px;">Установщики</div><div class="a" style="left:83px;top:62px;width:777px;height:546px;background:#fff;border:1px solid #b9b9b9"></div><div class="a" style="left:524px;top:63px;width:1px;height:23px;background:#e5e5e5"></div><div class="a" style="left:547px;top:63px;width:1px;height:23px;background:#e5e5e5"></div><div class="a" style="left:674px;top:63px;width:1px;height:23px;background:#e5e5e5"></div><div class="a" style="left:744px;top:63px;width:1px;height:23px;background:#e5e5e5"></div><div class="t ls" style="left:91px;top:71px;">Пакет</div><svg class="a" style="left:533px;top:71px" width="10" height="7" viewBox="0 0 10 7"><path d="M0.5 6.5 L5 0.5 L9.5 6.5 Z" fill="#000"/></svg><div class="t ls" style="left:554px;top:71px;">Изменен</div><div class="t ls" style="left:681px;top:71px;">Размер</div><div class="t ls" style="left:751px;top:71px;">Файлы</div><div class="a" style="left:84px;top:87px;width:758px;height:520px;overflow:hidden"><div class="a" style="left:6px;top:1.80px;width:13px;height:13px;background:#c3c3c3;border:1px solid #2a2a2a"></div><div class="t ls" style="left:22px;top:3.50px;color:#f06464">==Last==</div><div class="t ls" style="left:446px;top:3.50px;color:#f06464">0</div><div class="t ls" style="left:470px;top:3.50px;color:#f06464">23.08.2020 22:21:24</div><div class="a" style="left:20px;top:17.38px;width:738px;height:17.5px;background:#0078d7"></div><div class="a" style="left:6px;top:19.63px;width:13px;height:13px;background:#8fb8d0;border:1px solid #2a2a2a"></div><div class="a" style="left:11.5px;top:22.13px;width:2px;height:8px;background:#3a8a50"></div><div class="a" style="left:8.5px;top:25.13px;width:8px;height:2px;background:#3a8a50"></div><div class="t ls" style="left:22px;top:21.33px;color:#fff">Marie Rose Race Mod By Turkey Tail-48652-1-1-1606539414.rar</div><div class="t ls" style="left:446px;top:21.33px;color:#fff">1</div><div class="t ls" style="left:470px;top:21.33px;color:#fff">28.11.2020 13:54:37</div><div class="t ls" style="left:597px;top:21.33px;color:#fff">106269 KB</div><div class="t ls" style="left:667px;top:21.33px;color:#fff">79</div><div class="a" style="left:6px;top:37.47px;width:13px;height:13px;background:#ffffb4;border:1px solid #2a2a2a"></div><div class="a" style="left:11.5px;top:39.97px;width:2px;height:8px;background:#a8a800"></div><div class="a" style="left:8.5px;top:42.97px;width:8px;height:2px;background:#a8a800"></div><div class="t ls" style="left:22px;top:39.17px;color:#000">FSM Body Textures Extreme - Clean - Full.7z</div><div class="t ls" style="left:446px;top:39.17px;color:#000">2</div><div class="t ls" style="left:470px;top:39.17px;color:#000">27.11.2020 0:00:11</div><div class="t ls" style="left:597px;top:39.17px;color:#000">7637689 ...</div><div class="t ls" style="left:667px;top:39.17px;color:#000">1101</div><div class="a" style="left:6px;top:55.31px;width:13px;height:13px;background:#ffc8c8;border:1px solid #2a2a2a"></div><div class="t ls" style="left:22px;top:57.01px;color:#000">War of the Commonwealth-12395-1-4.zip</div><div class="t ls" style="left:446px;top:57.01px;color:#000">3</div><div class="t ls" style="left:470px;top:57.01px;color:#000">19.10.2020 21:22:00</div><div class="t ls" style="left:597px;top:57.01px;color:#000">87464 KB</div><div class="t ls" style="left:667px;top:57.01px;color:#000">3</div><div class="a" style="left:6px;top:73.14px;width:13px;height:13px;background:#c4f4c4;border:1px solid #2a2a2a"></div><div class="a" style="left:11.5px;top:75.64px;width:2px;height:8px;background:#00a000"></div><div class="a" style="left:8.5px;top:78.64px;width:8px;height:2px;background:#00a000"></div><div class="t ls" style="left:22px;top:74.84px;color:#000">More Girly Animation v2.5-21914-2-5-1593466366.zip</div><div class="t ls" style="left:446px;top:74.84px;color:#000">4</div><div class="t ls" style="left:470px;top:74.84px;color:#000">10.10.2020 4:15:11</div><div class="t ls" style="left:597px;top:74.84px;color:#000">186 KB</div><div class="t ls" style="left:667px;top:74.84px;color:#000">42</div><div class="a" style="left:6px;top:90.98px;width:13px;height:13px;background:#ffc8c8;border:1px solid #2a2a2a"></div><div class="t ls" style="left:22px;top:92.68px;color:#000">Sexy Idle Pose v1.3-21914-1-3.zip</div><div class="t ls" style="left:446px;top:92.68px;color:#000">5</div><div class="t ls" style="left:470px;top:92.68px;color:#000">10.10.2020 4:15:54</div><div class="t ls" style="left:597px;top:92.68px;color:#000">194 KB</div><div class="t ls" style="left:667px;top:92.68px;color:#000">1</div><div class="a" style="left:6px;top:108.81px;width:13px;height:13px;background:#c4f4c4;border:1px solid #2a2a2a"></div><div class="a" style="left:11.5px;top:111.31px;width:2px;height:8px;background:#00a000"></div><div class="a" style="left:8.5px;top:114.31px;width:8px;height:2px;background:#00a000"></div><div class="t ls" style="left:22px;top:110.51px;color:#000">LMSE - Far Harbor v.0.99b-17343-0-99b.rar</div><div class="t ls" style="left:446px;top:110.51px;color:#000">6</div><div class="t ls" style="left:470px;top:110.51px;color:#000">25.08.2020 5:37:40</div><div class="t ls" style="left:597px;top:110.51px;color:#000">690 KB</div><div class="t ls" style="left:667px;top:110.51px;color:#000">1</div><div class="a" style="left:6px;top:126.64px;width:13px;height:13px;background:#c4f4c4;border:1px solid #2a2a2a"></div><div class="a" style="left:11.5px;top:129.14px;width:2px;height:8px;background:#00a000"></div><div class="a" style="left:8.5px;top:132.14px;width:8px;height:2px;background:#00a000"></div><div class="t ls" style="left:22px;top:128.34px;color:#000">Lots More Settlers and Enemies v.0.99b - (LMSE Main File)-17343-0-99b.rar</div><div class="t ls" style="left:446px;top:128.34px;color:#000">7</div><div class="t ls" style="left:470px;top:128.34px;color:#000">25.08.2020 5:40:26</div><div class="t ls" style="left:597px;top:128.34px;color:#000">3416 KB</div><div class="t ls" style="left:667px;top:128.34px;color:#000">1</div><div class="a" style="left:6px;top:144.48px;width:13px;height:13px;background:#c4f4c4;border:1px solid #2a2a2a"></div><div class="a" style="left:11.5px;top:146.98px;width:2px;height:8px;background:#00a000"></div><div class="a" style="left:8.5px;top:149.98px;width:8px;height:2px;background:#00a000"></div><div class="t ls" style="left:22px;top:146.18px;color:#000">NewFace Settlers - Clean-5038-1-4.7z</div><div class="t ls" style="left:446px;top:146.18px;color:#000">8</div><div class="t ls" style="left:470px;top:146.18px;color:#000">24.08.2020 2:31:25</div><div class="t ls" style="left:597px;top:146.18px;color:#000">84 KB</div><div class="t ls" style="left:667px;top:146.18px;color:#000">1</div><div class="a" style="left:6px;top:162.31px;width:13px;height:13px;background:#c4f4c4;border:1px solid #2a2a2a"></div><div class="a" style="left:11.5px;top:164.81px;width:2px;height:8px;background:#00a000"></div><div class="a" style="left:8.5px;top:167.81px;width:8px;height:2px;background:#00a000"></div><div class="t ls" style="left:22px;top:164.01px;color:#000">Female MacCready With Voice Makeover-19595-1-0.zip</div><div class="t ls" style="left:446px;top:164.01px;color:#000">9</div><div class="t ls" style="left:470px;top:164.01px;color:#000">14.04.2020 16:12:28</div><div class="t ls" style="left:597px;top:164.01px;color:#000">51313 KB</div><div class="t ls" style="left:667px;top:164.01px;color:#000">2</div><div class="a" style="left:6px;top:180.15px;width:13px;height:13px;background:#ffffb4;border:1px solid #2a2a2a"></div><div class="a" style="left:11.5px;top:182.65px;width:2px;height:8px;background:#a8a800"></div><div class="a" style="left:8.5px;top:185.65px;width:8px;height:2px;background:#a8a800"></div><div class="t ls" style="left:22px;top:181.85px;color:#000">ADDON_Body_Textures_With_Detailed_Vagina.zip</div><div class="t ls" style="left:446px;top:181.85px;color:#000">1..</div><div class="t ls" style="left:470px;top:181.85px;color:#000">05.08.2020 21:28:33</div><div class="t ls" style="left:597px;top:181.85px;color:#000">44729 KB</div><div class="t ls" style="left:667px;top:181.85px;color:#000">9</div><div class="a" style="left:6px;top:197.99px;width:13px;height:13px;background:#ffc4c4;border:1px solid #2a2a2a"></div><div class="a" style="left:11.5px;top:200.49px;width:2px;height:8px;background:#c00000"></div><div class="a" style="left:8.5px;top:203.49px;width:8px;height:2px;background:#c00000"></div><div class="t ls" style="left:22px;top:199.69px;color:#000">Animated_Fannies__1_1.zip</div><div class="t ls" style="left:446px;top:199.69px;color:#000">11</div><div class="t ls" style="left:470px;top:199.69px;color:#000">05.08.2020 21:26:19</div><div class="t ls" style="left:597px;top:199.69px;color:#000">3114 KB</div><div class="t ls" style="left:667px;top:199.69px;color:#000">6</div><div class="a" style="left:6px;top:215.82px;width:13px;height:13px;background:#c4f4c4;border:1px solid #2a2a2a"></div><div class="a" style="left:11.5px;top:218.32px;width:2px;height:8px;background:#00a000"></div><div class="a" style="left:8.5px;top:221.32px;width:8px;height:2px;background:#00a000"></div><div class="t ls" style="left:22px;top:217.52px;color:#000">Anime Pack-35316-1-0-11-1547484480.rar</div><div class="t ls" style="left:446px;top:217.52px;color:#000">1..</div><div class="t ls" style="left:470px;top:217.52px;color:#000">20.07.2019 10:28:49</div><div class="t ls" style="left:597px;top:217.52px;color:#000">22 KB</div><div class="t ls" style="left:667px;top:217.52px;color:#000">15</div><div class="a" style="left:6px;top:233.66px;width:13px;height:13px;background:#ffffb4;border:1px solid #2a2a2a"></div><div class="a" style="left:11.5px;top:236.16px;width:2px;height:8px;background:#a8a800"></div><div class="a" style="left:8.5px;top:239.16px;width:8px;height:2px;background:#a8a800"></div><div class="t ls" style="left:22px;top:235.36px;color:#000">BodySlide and Outfit Studio - v5.0.7-25-5-0-7-1591033836.7z</div><div class="t ls" style="left:446px;top:235.36px;color:#000">1..</div><div class="t ls" style="left:470px;top:235.36px;color:#000">29.07.2020 15:56:27</div><div class="t ls" style="left:597px;top:235.36px;color:#000">17795 KB</div><div class="t ls" style="left:667px;top:235.36px;color:#000">197</div><div class="a" style="left:6px;top:251.49px;width:13px;height:13px;background:#c4f4c4;border:1px solid #2a2a2a"></div><div class="a" style="left:11.5px;top:253.99px;width:2px;height:8px;background:#00a000"></div><div class="a" style="left:8.5px;top:256.99px;width:8px;height:2px;background:#00a000"></div><div class="t ls" style="left:22px;top:253.19px;color:#000">CBBE Companions with BodySlide-32011-1-1-1579578919.7z</div><div class="t ls" style="left:446px;top:253.19px;color:#000">1..</div><div class="t ls" style="left:470px;top:253.19px;color:#000">08.08.2020 9:35:00</div><div class="t ls" style="left:597px;top:253.19px;color:#000">3426 KB</div><div class="t ls" style="left:667px;top:253.19px;color:#000">16</div><div class="a" style="left:6px;top:269.33px;width:13px;height:13px;background:#c4f4c4;border:1px solid #2a2a2a"></div><div class="a" style="left:11.5px;top:271.83px;width:2px;height:8px;background:#00a000"></div><div class="a" style="left:8.5px;top:274.83px;width:8px;height:2px;background:#00a000"></div><div class="t ls" style="left:22px;top:271.03px;color:#000">Clean and Simple Merges 4.7.7z</div><div class="t ls" style="left:446px;top:271.03px;color:#000">1..</div><div class="t ls" style="left:470px;top:271.03px;color:#000">09.04.2020 4:36:10</div><div class="t ls" style="left:597px;top:271.03px;color:#000">60492 KB</div><div class="t ls" style="left:667px;top:271.03px;color:#000">15</div><div class="a" style="left:6px;top:287.16px;width:13px;height:13px;background:#ffcc99;border:1px solid #2a2a2a"></div><div class="a" style="left:11.5px;top:289.66px;width:2px;height:8px;background:#f07800"></div><div class="a" style="left:8.5px;top:292.66px;width:8px;height:2px;background:#f07800"></div><div class="t ls" style="left:22px;top:288.86px;color:#000">Companion Ivy 5.3 WITH Porn Mag Addon.7z</div><div class="t ls" style="left:446px;top:288.86px;color:#000">1..</div><div class="t ls" style="left:470px;top:288.86px;color:#000">09.08.2020 11:11:53</div><div class="t ls" style="left:597px;top:288.86px;color:#000">415385 KB</div><div class="t ls" style="left:667px;top:288.86px;color:#000">12</div><div class="a" style="left:6px;top:305.00px;width:13px;height:13px;background:#c4f4c4;border:1px solid #2a2a2a"></div><div class="a" style="left:11.5px;top:307.50px;width:2px;height:8px;background:#00a000"></div><div class="a" style="left:8.5px;top:310.50px;width:8px;height:2px;background:#00a000"></div><div class="t ls" style="left:22px;top:306.69px;color:#000">Companion Ivy 5.3 WITH Porn Mag Addon_ru (1).7z</div><div class="t ls" style="left:446px;top:306.69px;color:#000">1..</div><div class="t ls" style="left:470px;top:306.69px;color:#000">09.08.2020 11:04:47</div><div class="t ls" style="left:597px;top:306.69px;color:#000">1123 KB</div><div class="t ls" style="left:667px;top:306.69px;color:#000">3</div><div class="a" style="left:20px;top:320.58px;width:738px;height:17.5px;background:#dcdcdc"></div><div class="a" style="left:6px;top:322.83px;width:13px;height:13px;background:#c4f4c4;border:1px solid #2a2a2a"></div><div class="a" style="left:11.5px;top:325.33px;width:2px;height:8px;background:#00a000"></div><div class="a" style="left:8.5px;top:328.33px;width:8px;height:2px;background:#00a000"></div><div class="t ls" style="left:22px;top:324.53px;color:#000">Futanari FEV 2.1.1 AAF.7z</div><div class="t ls" style="left:446px;top:324.53px;color:#000">1..</div><div class="t ls" style="left:470px;top:324.53px;color:#000">05.08.2020 21:22:47</div><div class="t ls" style="left:597px;top:324.53px;color:#000">4839 KB</div><div class="t ls" style="left:667px;top:324.53px;color:#000">44</div><div class="a" style="left:6px;top:340.67px;width:13px;height:13px;background:#c4f4c4;border:1px solid #2a2a2a"></div><div class="a" style="left:11.5px;top:343.17px;width:2px;height:8px;background:#00a000"></div><div class="a" style="left:8.5px;top:346.17px;width:8px;height:2px;background:#00a000"></div><div class="t ls" style="left:22px;top:342.37px;color:#000">Girly Animation v4.3.1-21914-4-3-1-1543423967.zip</div><div class="t ls" style="left:446px;top:342.37px;color:#000">1..</div><div class="t ls" style="left:470px;top:342.37px;color:#000">10.10.2020 4:14:30</div><div class="t ls" style="left:597px;top:342.37px;color:#000">4474 KB</div><div class="t ls" style="left:667px;top:342.37px;color:#000">2</div><div class="a" style="left:20px;top:356.25px;width:738px;height:17.5px;background:#dcdcdc"></div><div class="a" style="left:6px;top:358.50px;width:13px;height:13px;background:#ffcc99;border:1px solid #2a2a2a"></div><div class="a" style="left:11.5px;top:361.00px;width:2px;height:8px;background:#f07800"></div><div class="a" style="left:8.5px;top:364.00px;width:8px;height:2px;background:#f07800"></div><div class="t ls" style="left:22px;top:360.20px;color:#000">Horizon 1.8.0 BETA-7-17374-1-8-0-1578191234.zip</div><div class="t ls" style="left:446px;top:360.20px;color:#000">2..</div><div class="t ls" style="left:470px;top:360.20px;color:#000">09.04.2020 11:43:54</div><div class="t ls" style="left:597px;top:360.20px;color:#000">392052 KB</div><div class="t ls" style="left:667px;top:360.20px;color:#000">83</div><div class="a" style="left:6px;top:376.34px;width:13px;height:13px;background:#c4f4c4;border:1px solid #2a2a2a"></div><div class="a" style="left:11.5px;top:378.84px;width:2px;height:8px;background:#00a000"></div><div class="a" style="left:8.5px;top:381.84px;width:8px;height:2px;background:#00a000"></div><div class="t ls" style="left:22px;top:378.04px;color:#000">Horizon v1.8 Fixes ESP-36030-1-0-1594641158.7z</div><div class="t ls" style="left:446px;top:378.04px;color:#000">2..</div><div class="t ls" style="left:470px;top:378.04px;color:#000">29.07.2020 15:50:30</div><div class="t ls" style="left:597px;top:378.04px;color:#000">3 KB</div><div class="t ls" style="left:667px;top:378.04px;color:#000">1</div><div class="a" style="left:20px;top:391.92px;width:738px;height:17.5px;background:#dcdcdc"></div><div class="a" style="left:6px;top:394.17px;width:13px;height:13px;background:#c4f4c4;border:1px solid #2a2a2a"></div><div class="a" style="left:11.5px;top:396.67px;width:2px;height:8px;background:#00a000"></div><div class="a" style="left:8.5px;top:399.67px;width:8px;height:2px;background:#00a000"></div><div class="t ls" style="left:22px;top:395.87px;color:#000">Horizon v1.8.0 B7 Translation FOMOD Ru-36030-1-8-0-1578257161.7z</div><div class="t ls" style="left:446px;top:395.87px;color:#000">2..</div><div class="t ls" style="left:470px;top:395.87px;color:#000">10.04.2020 10:30:33</div><div class="t ls" style="left:597px;top:395.87px;color:#000">19978 KB</div><div class="t ls" style="left:667px;top:395.87px;color:#000">82</div><div class="a" style="left:6px;top:412.01px;width:13px;height:13px;background:#c4f4c4;border:1px solid #2a2a2a"></div><div class="a" style="left:11.5px;top:414.51px;width:2px;height:8px;background:#00a000"></div><div class="a" style="left:8.5px;top:417.51px;width:8px;height:2px;background:#00a000"></div><div class="t ls" style="left:22px;top:413.71px;color:#000">LEVEL SCALE all in one 2.2-6957-2-2.rar</div><div class="t ls" style="left:446px;top:413.71px;color:#000">2..</div><div class="t ls" style="left:470px;top:413.71px;color:#000">28.06.2020 10:51:53</div><div class="t ls" style="left:597px;top:413.71px;color:#000">851 KB</div><div class="t ls" style="left:667px;top:413.71px;color:#000">5</div><div class="a" style="left:6px;top:429.84px;width:13px;height:13px;background:#ffffb4;border:1px solid #2a2a2a"></div><div class="a" style="left:11.5px;top:432.34px;width:2px;height:8px;background:#a8a800"></div><div class="a" style="left:8.5px;top:435.34px;width:8px;height:2px;background:#a8a800"></div><div class="t ls" style="left:22px;top:431.54px;color:#000">Lucie Wilde-35316-1-0-05-1541911825.rar</div><div class="t ls" style="left:446px;top:431.54px;color:#000">2..</div><div class="t ls" style="left:470px;top:431.54px;color:#000">20.07.2019 10:25:12</div><div class="t ls" style="left:597px;top:431.54px;color:#000">4 KB</div><div class="t ls" style="left:667px;top:431.54px;color:#000">3</div><div class="a" style="left:6px;top:447.67px;width:13px;height:13px;background:#c4f4c4;border:1px solid #2a2a2a"></div><div class="t ls" style="left:22px;top:449.37px;color:#000">Mostly Female NPCs-4916-0-7 (1).zip</div><div class="t ls" style="left:446px;top:449.37px;color:#000">2..</div><div class="t ls" style="left:470px;top:449.37px;color:#000">20.08.2020 13:21:43</div><div class="t ls" style="left:597px;top:449.37px;color:#000">238 KB</div><div class="t ls" style="left:667px;top:449.37px;color:#000">1</div><div class="a" style="left:6px;top:465.51px;width:13px;height:13px;background:#c4f4c4;border:1px solid #2a2a2a"></div><div class="a" style="left:11.5px;top:468.01px;width:2px;height:8px;background:#00a000"></div><div class="a" style="left:8.5px;top:471.01px;width:8px;height:2px;background:#00a000"></div><div class="t ls" style="left:22px;top:467.21px;color:#000">MuffFluff 1-18 v2.7z</div><div class="t ls" style="left:446px;top:467.21px;color:#000">2..</div><div class="t ls" style="left:470px;top:467.21px;color:#000">31.07.2020 1:15:07</div><div class="t ls" style="left:597px;top:467.21px;color:#000">99399 KB</div><div class="t ls" style="left:667px;top:467.21px;color:#000">42</div><div class="a" style="left:6px;top:483.35px;width:13px;height:13px;background:#c4f4c4;border:1px solid #2a2a2a"></div><div class="a" style="left:11.5px;top:485.85px;width:2px;height:8px;background:#00a000"></div><div class="a" style="left:8.5px;top:488.85px;width:8px;height:2px;background:#00a000"></div><div class="t ls" style="left:22px;top:485.05px;color:#000">widow_shotgun_fixed_barrel_attachments_19619_1_1.rar</div><div class="t ls" style="left:446px;top:485.05px;color:#000">2..</div><div class="t ls" style="left:470px;top:485.05px;color:#000">21.06.2020 17:46:41</div><div class="t ls" style="left:597px;top:485.05px;color:#000">28389 KB</div><div class="t ls" style="left:667px;top:485.05px;color:#000">33</div><div class="a" style="left:6px;top:501.18px;width:13px;height:13px;background:#ffffb4;border:1px solid #2a2a2a"></div><div class="a" style="left:11.5px;top:503.68px;width:2px;height:8px;background:#a8a800"></div><div class="a" style="left:8.5px;top:506.68px;width:8px;height:2px;background:#a8a800"></div><div class="t ls" style="left:22px;top:502.88px;color:#000">ZaZ-Extended_Skeleton (ZEX)-36702-V2-0-1559695603.rar</div><div class="t ls" style="left:446px;top:502.88px;color:#000">2..</div><div class="t ls" style="left:470px;top:502.88px;color:#000">18.06.2020 22:52:26</div><div class="t ls" style="left:597px;top:502.88px;color:#000">71 KB</div><div class="t ls" style="left:667px;top:502.88px;color:#000">4</div><div class="a" style="left:6px;top:519.01px;width:13px;height:13px;background:#c3c3c3;border:1px solid #2a2a2a"></div></div><div class="a" style="left:842px;top:63px;width:15px;height:544px;background:#f0f0f0"></div><div class="a" style="left:843px;top:80px;width:13px;height:462px;background:#cdcdcd"></div><svg class="a" style="left:845px;top:68px" width="9" height="6" viewBox="0 0 9 6"><path d="M0.8 5 L4.5 1.2 L8.2 5" stroke="#606060" stroke-width="1.3" fill="none"/></svg><svg class="a" style="left:845px;top:596px" width="9" height="6" viewBox="0 0 9 6"><path d="M0.8 1 L4.5 4.8 L8.2 1" stroke="#606060" stroke-width="1.3" fill="none"/></svg><div class="a" style="left:860px;top:61px;width:920px;height:462px;background:#fff"></div><div class="t ui" style="left:864px;top:63px;letter-spacing:-0.66px">Marie Rose Race Mod By Turkey Tail-48652-1-1-1606539414.rar</div><div class="a" style="left:1762px;top:63px;width:15px;height:27px;background:#f0f0f0"></div><svg class="a" style="left:1765px;top:71px" width="9" height="6" viewBox="0 0 9 6"><path d="M0.8 5 L4.5 1.2 L8.2 5" stroke="#a8a8a8" stroke-width="1.2" fill="none"/></svg><svg class="a" style="left:1765px;top:80px" width="9" height="6" viewBox="0 0 9 6"><path d="M0.8 1 L4.5 4.8 L8.2 1" stroke="#a8a8a8" stroke-width="1.2" fill="none"/></svg><div class="a" style="left:865.3px;top:92.5px;width:46.90000000000009px;height:21px;background:#f0f0f0;border:1px solid #dadada;border-bottom:none"></div><div class="t ui" style="left:871px;top:95.5px;">Общее</div><div class="a" style="left:912.2px;top:92.5px;width:73.29999999999995px;height:21px;background:#f0f0f0;border:1px solid #dadada;border-bottom:none"></div><div class="t ui" style="left:919px;top:95.5px;">Совпадения</div><div class="a" style="left:985.5px;top:92.5px;width:76.09999999999991px;height:21px;background:#f0f0f0;border:1px solid #dadada;border-bottom:none"></div><div class="t ui" style="left:992px;top:95.5px;">Отсутствуют</div><div class="a" style="left:1061.6px;top:92.5px;width:84.40000000000009px;height:21px;background:#f0f0f0;border:1px solid #dadada;border-bottom:none"></div><div class="t ui" style="left:1067.5px;top:95.5px;">Несовпадения</div><div class="a" style="left:1220px;top:92.5px;width:85px;height:21px;background:#f0f0f0;border:1px solid #dadada;border-bottom:none"></div><div class="t ui" style="left:1225px;top:95.5px;">Перезаписаны</div><div class="a" style="left:1305px;top:92.5px;width:60px;height:21px;background:#f0f0f0;border:1px solid #dadada;border-bottom:none"></div><div class="t ui" style="left:1311px;top:95.5px;">&#x27;Грязные&#x27;</div><div class="a" style="left:1365px;top:92.5px;width:75px;height:21px;background:#f0f0f0;border:1px solid #dadada;border-bottom:none"></div><div class="t ui" style="left:1371px;top:95.5px;">Пропущены</div><div class="a" style="left:866px;top:112.5px;width:909px;height:1px;background:#d9d9d9"></div><div class="a" style="left:1146px;top:90.3px;width:74px;height:23px;background:#fff;border:1px solid #d9d9d9;border-bottom:none"></div><div class="t ui" style="left:1153px;top:93.5px;">Конфликты</div><div class="a" style="left:867px;top:113px;width:907px;height:407px;background:#fff;border:1px solid #a0a0a0;border-top:2px solid #a9a9a9"></div><div class="t ui" style="left:870px;top:117px;">= Выше</div><div class="t ui" style="left:914px;top:117px;letter-spacing:0.28px">=========================================</div><div class="t ui" style="left:870px;top:131px;letter-spacing:-0.55px">==28== ZaZ-Extended_Skeleton (ZEX)-36702-V2-0-1559695603.rar</div><div class="t ui" style="left:870px;top:145px;letter-spacing:-0.35px">Meshes\Actors\Character\CharacterAssets\skeleton.nif</div><div class="a" style="left:1757px;top:115px;width:16px;height:388px;background:#f0f0f0"></div><div class="a" style="left:868px;top:503px;width:905px;height:16px;background:#f0f0f0"></div><svg class="a" style="left:1760px;top:118px" width="9" height="6" viewBox="0 0 9 6"><path d="M0.8 5 L4.5 1.2 L8.2 5" stroke="#a8a8a8" stroke-width="1.2" fill="none"/></svg><svg class="a" style="left:1760px;top:491px" width="9" height="6" viewBox="0 0 9 6"><path d="M0.8 1 L4.5 4.8 L8.2 1" stroke="#a8a8a8" stroke-width="1.2" fill="none"/></svg><svg class="a" style="left:873px;top:506px" width="6" height="9" viewBox="0 0 6 9"><path d="M5 0.8 L1.2 4.5 L5 8.2" stroke="#a8a8a8" stroke-width="1.2" fill="none"/></svg><svg class="a" style="left:1745px;top:506px" width="6" height="9" viewBox="0 0 6 9"><path d="M1 0.8 L4.8 4.5 L1 8.2" stroke="#a8a8a8" stroke-width="1.2" fill="none"/></svg><div class="a" style="left:861px;top:521px;width:916px;height:1px;background:#e3e3e3"></div><div class="t ui" style="left:864px;top:528.5px;">Подпакеты</div><div class="a" style="left:863px;top:543px;width:699px;height:32px;background:#fff;border:1px solid #b4b4b4"></div><div class="t ui" style="left:1566px;top:528.5px;">Plugin Filter</div><div class="a" style="left:1565px;top:543px;width:212px;height:32px;background:#fff;border:1px solid #b4b4b4"></div><div class="a" style="left:1761px;top:544px;width:15px;height:30px;background:#f0f0f0"></div><div class="a" style="left:1566px;top:544px;width:194px;height:28.5px;overflow:hidden"><div class="a" style="left:3px;top:2.5px;width:13px;height:12px;border:1px solid #333;background:#fff"></div><svg class="a" style="left:4px;top:3.5px" width="11" height="10" viewBox="0 0 11 10"><path d="M1.5 5 L4 8 L9.5 1.5" stroke="#222" stroke-width="1.2" fill="none"/></svg><div class="t ui" style="left:19px;top:3.0px">MarieRoseRace.esp</div><div class="a" style="left:3px;top:18.5px;width:13px;height:12px;border:1px solid #333;background:#fff"></div><svg class="a" style="left:4px;top:19.5px" width="11" height="10" viewBox="0 0 11 10"><path d="M1.5 5 L4 8 L9.5 1.5" stroke="#222" stroke-width="1.2" fill="none"/></svg><div class="t ui" style="left:19px;top:19.0px">RaceCustomizer - Player Exclusive Bodies.esp</div></div><svg class="a" style="left:1763px;top:549px" width="9" height="6" viewBox="0 0 9 6"><path d="M0.8 5 L4.5 1.2 L8.2 5" stroke="#333" stroke-width="1.2" fill="none"/></svg><svg class="a" style="left:1763px;top:562px" width="9" height="6" viewBox="0 0 9 6"><path d="M0.8 1 L4.5 4.8 L8.2 1" stroke="#333" stroke-width="1.2" fill="none"/></svg><div class="t ui" style="left:864px;top:579px;">Comments</div><div class="a" style="left:863px;top:593px;width:914px;height:15px;background:#fff;border:1px solid #a0a0a0"></div><div class="a" style="left:1761px;top:594px;width:15px;height:13px;background:#f0f0f0"></div><div class="a" style="left:80px;top:611px;width:1700px;height:1px;background:#e2e2e2"></div><div class="a" style="left:313px;top:613px;width:1px;height:19px;background:#dcdcdc"></div><div class="t ui" style="left:1496px;top:618px;">Пакеты: 28/32</div><div class="a" style="left:1490px;top:613px;width:1px;height:19px;background:#dcdcdc"></div><div class="a" style="left:1775px;top:630px;width:2px;height:2px;background:#b8b8b8"></div><div class="a" style="left:1775px;top:626px;width:2px;height:2px;background:#b8b8b8"></div><div class="a" style="left:1771px;top:630px;width:2px;height:2px;background:#b8b8b8"></div><div class="a" style="left:1771px;top:626px;width:2px;height:2px;background:#b8b8b8"></div><div class="a" style="left:1775px;top:622px;width:2px;height:2px;background:#b8b8b8"></div><div class="a" style="left:1767px;top:630px;width:2px;height:2px;background:#b8b8b8"></div><svg class="a" style="left:80px;top:612px" width="240" height="21" viewBox="0 0 240 21"><rect x="4.5" y="5.5" width="12.5" height="12.5" fill="#c6f7c6" stroke="#333" stroke-width="1"/><path d="M6.5 11.5 L9.5 15 L15.5 7.5" stroke="#0a880a" stroke-width="2" fill="none"/><rect x="27.5" y="5.5" width="12.5" height="12.5" fill="#ffc6c6" stroke="#333" stroke-width="1"/><circle cx="55.5" cy="11" r="7.5" fill="#2f9cf2"/><path d="M52 18 L60 4" stroke="#f2d23a" stroke-width="2.4"/><ellipse cx="55.5" cy="11.5" rx="3.6" ry="4.2" fill="#f3dcb0"/><path d="M51.5 8 Q55 4.5 59.5 8 L58 9 Q55 7 52.5 9.2 Z" fill="#e8c850"/><path d="M70.5 12 L77.5 6.5 L81.5 8 L86.5 9.5 L86.5 13.5 L81 14 L77.5 17.5 Z" fill="#2a3238"/><path d="M72 12 L86 12" stroke="#6a7a80" stroke-width="0.8"/><rect x="93.5" y="4.5" width="13" height="13.5" fill="#f4f6fa"/><rect x="94" y="5" width="11" height="10" fill="#2a62c8"/><path d="M96 8 Q100 5.5 105 8.5 L105 11 Q100 9 96 11 Z" fill="#dfe8f8"/><path d="M97 17 L108 7" stroke="#c82828" stroke-width="1.6"/><rect x="115.5" y="3.5" width="15" height="15" rx="1.5" fill="#000"/><path d="M118 10 L123.5 13.5 L127.5 9" stroke="#e8e8e8" stroke-width="1.6" fill="none"/><circle cx="127.5" cy="9" r="1.5" fill="none" stroke="#e8e8e8" stroke-width="0.8"/><path d="M140.5 4.5 L149 4.5 L152.5 8 L152.5 18.5 L140.5 18.5 Z" fill="#e8d09a"/><text x="140.5" y="14.5" font-family="Liberation Sans" font-size="6.5" fill="#444">Doc</text><rect x="161.5" y="5" width="11" height="13" fill="#f2f6fa" stroke="#cdd6e0" stroke-width="0.6"/><circle cx="163.5" cy="8" r="1" fill="#3ab83a"/><circle cx="163.5" cy="11" r="1" fill="#3ab83a"/><circle cx="163.5" cy="15" r="1" fill="#e03030"/><path d="M166 15 L174 6" stroke="#f0b030" stroke-width="2.6"/><circle cx="174.5" cy="5.5" r="1.6" fill="#f04020"/><circle cx="190.5" cy="11" r="6.8" fill="none" stroke="#8589ef" stroke-width="3.6" stroke-dasharray="2.2 1.3"/><circle cx="190.5" cy="11" r="5.6" fill="none" stroke="#8589ef" stroke-width="2.4"/><circle cx="213.5" cy="11" r="7.5" fill="#2c4c9c" stroke="#5a70a8" stroke-width="0.8"/><text x="210.2" y="15" font-family="Liberation Sans" font-weight="bold" font-size="10.5" fill="#fff">?</text></svg><div class="a" style="left:0px;top:1042px;width:1920px;height:38px;background:#1c1f27"></div><div class="a" style="left:45px;top:1042px;width:322px;height:38px;background:#f0f0f0"></div><svg class="a" style="left:14px;top:1053px" width="17" height="17" viewBox="0 0 17 17"><path d="M0.5 2.3 L7 1.4 L7 7.8 L0.5 7.8 Z M8 1.2 L16 0.3 L16 7.8 L8 7.8 Z M0.5 8.8 L7 8.8 L7 15.2 L0.5 14.4 Z M8 8.8 L16 8.8 L16 16.3 L8 15.4 Z" fill="#fff"/></svg><svg class="a" style="left:55px;top:1053px" width="18" height="17" viewBox="0 0 18 17"><circle cx="10.5" cy="6.5" r="5" stroke="#222" stroke-width="1.4" fill="none"/><path d="M7 10 L1.5 15.5" stroke="#222" stroke-width="1.6"/></svg><div class="t" style="left:83px;top:1054px;font-size:14px;color:#3c3c3c;letter-spacing:-0.15px">Введите здесь текст для поиска</div><svg class="a" style="left:381px;top:1052px" width="18" height="18" viewBox="0 0 18 18"><circle cx="9" cy="9" r="6.6" stroke="#fff" stroke-width="1.9" fill="none"/></svg><svg class="a" style="left:426px;top:1053px" width="18" height="16" viewBox="0 0 18 16"><path d="M1.5 0.5 L1.5 2 L10.5 2 L10.5 0.5 M1.5 15.5 L1.5 14 L10.5 14 L10.5 15.5" stroke="#ddd" stroke-width="1" fill="none"/><rect x="2" y="4.5" width="8" height="7" stroke="#ddd" stroke-width="1.1" fill="none"/><path d="M14.5 0.5 L14.5 15.5" stroke="#ddd" stroke-width="1"/><circle cx="14.5" cy="6" r="1.2" fill="#ddd"/></svg><svg class="a" style="left:471px;top:1049px" width="24" height="24" viewBox="0 0 24 24"><defs><linearGradient id="eg1" x1="0" y1="0" x2="1" y2="1"><stop offset="0" stop-color="#35c1f1"/><stop offset="0.6" stop-color="#37b3a0"/><stop offset="1" stop-color="#7ee36a"/></linearGradient><linearGradient id="eg2" x1="0" y1="0" x2="0" y2="1"><stop offset="0" stop-color="#1a7fd8"/><stop offset="1" stop-color="#0c55a8"/></linearGradient></defs><circle cx="12" cy="12" r="11.2" fill="url(#eg1)"/><path d="M1 12 Q1 23 12 23.2 Q19 23 22 17 Q18 20 13 18.5 Q8 16 9.5 12 Q11 9.5 14.5 10.5 Q12 6 7 7.5 Q2 9.5 1 12 Z" fill="url(#eg2)"/><path d="M9.5 12 Q11 9.5 14.5 10.5 Q16 12.5 14 14 L20.5 14 Q21.5 10 18 7 Q14 5 10 7 Z" fill="#2aa4e0" opacity="0.5"/></svg><svg class="a" style="left:518px;top:1049px" width="23" height="24" viewBox="0 0 23 24"><path d="M7 7 L7 3 Q7 1 9 1 L14 1 Q16 1 16 3 L16 7" stroke="#e8e8e8" stroke-width="1.8" fill="none"/><rect x="1" y="6.5" width="21" height="16.5" rx="1" fill="#f4f4f4"/><rect x="7" y="11" width="4" height="4" fill="#f25022"/><rect x="12" y="11" width="4" height="4" fill="#7fba00"/><rect x="7" y="16" width="4" height="4" fill="#00a4ef"/><rect x="12" y="16" width="4" height="4" fill="#ffb900"/></svg><svg class="a" style="left:565px;top:1051px" width="22" height="19" viewBox="0 0 22 19"><path d="M0.5 1.5 L7.5 1.5 L9.5 3.5 L21.5 3.5 L21.5 17.5 L0.5 17.5 Z" fill="#f0b429"/><rect x="0.5" y="5" width="21" height="12.5" fill="#ffd865"/><path d="M3.5 18.5 L3.5 11 L18.5 11 L18.5 18.5 L15.5 18.5 L15.5 14 L6.5 14 L6.5 18.5 Z" fill="#3a8ee6"/></svg><svg class="a" style="left:611px;top:1050px" width="23" height="23" viewBox="0 0 23 23"><circle cx="11.5" cy="11.5" r="11.3" fill="#f2f2f2"/><path d="M6.5 5 L11.5 12 L16.5 5 M11.5 12 L11.5 19" stroke="#e22" stroke-width="2.3" fill="none"/></svg><div class="a" style="left:604px;top:1078px;width:38px;height:2px;background:#76b9ed"></div><svg class="a" style="left:658px;top:1050px" width="22" height="23" viewBox="0 0 22 23"><ellipse cx="11" cy="11.5" rx="8.8" ry="9.6" stroke="#e8182c" stroke-width="4.2" fill="none"/><ellipse cx="11" cy="11.5" rx="3.6" ry="7.2" stroke="#b5001c" stroke-width="1.8" fill="none"/></svg><svg class="a" style="left:705px;top:1051px" width="21" height="20" viewBox="0 0 21 20"><circle cx="11" cy="10" r="9.2" fill="#d32020"/><circle cx="11" cy="10" r="6.5" fill="#f8f8f8"/><path d="M14.5 7 Q12 5 10 7 Q8.5 10 10.5 12.5 Q12.5 14 14.5 12.5" stroke="#d32020" stroke-width="2.2" fill="none"/><path d="M1 17 Q4 12 8 11 L9.5 13 Q7 17 1 17 Z" fill="#f0c080"/><path d="M8 11 L11 4.5" stroke="#2060d0" stroke-width="1.5"/></svg><svg class="a" style="left:750px;top:1050px" width="23" height="23" viewBox="0 0 23 23"><circle cx="11.5" cy="11.5" r="11.2" fill="#2d9cf0"/><path d="M5 20 L18.5 2.5" stroke="#f0d038" stroke-width="4"/><ellipse cx="11.5" cy="12.5" rx="5.2" ry="6" fill="#f6e2b8"/><path d="M6 9.5 Q11 3.5 17 9 L15.5 10 Q11 6.5 7.5 10.5 Z" fill="#e8c840"/><circle cx="9.5" cy="12" r="0.8" fill="#333"/><circle cx="13.5" cy="12" r="0.8" fill="#333"/><path d="M9 15.5 Q11.5 17.5 14 15.5" stroke="#333" stroke-width="0.8" fill="none"/></svg><div class="a" style="left:743px;top:1078px;width:38px;height:2px;background:#76b9ed"></div><div class="a" style="left:786px;top:1043px;width:46px;height:37px;background:#3b3e47"></div><svg class="a" style="left:792px;top:1044px" width="34" height="32" viewBox="2 1 20 19"><path d="M5 3.6 L17.8 4 L16.8 6.8 L15.5 8.3 L14.7 6 L9.6 5.6 Q13.6 9.4 13.1 11.8 Q12.2 14.6 5.2 17.8 L4.5 8.6 L6.4 10.2 Q7.1 13.2 8.1 13.7 Q9.8 12.6 9.2 10.5 Q8.3 7.6 5 3.6 Z" fill="#d81010"/></svg><div class="a" style="left:786px;top:1078px;width:46px;height:2px;background:#76b9ed"></div><svg class="a" style="left:1686px;top:1056px" width="14" height="9" viewBox="0 0 14 9"><path d="M1 8 L7 1.5 L13 8" stroke="#eee" stroke-width="1.2" fill="none"/></svg><svg class="a" style="left:1709px;top:1053px" width="15" height="17" viewBox="0 0 15 17"><path d="M2 3 Q7 -0.5 12 3 M2 14 Q7 17.5 12 14" stroke="#ddd" stroke-width="1" fill="none"/><rect x="1.5" y="5" width="8" height="7" rx="1" stroke="#ddd" stroke-width="1.1" fill="none"/><path d="M9.5 7.5 L13.5 5.5 L13.5 11.5 L9.5 9.5" stroke="#ddd" stroke-width="1" fill="none"/></svg><svg class="a" style="left:1731px;top:1055px" width="17" height="14" viewBox="0 0 17 14"><path d="M1 12 Q7 2 15.5 3 M3.5 13 Q8 6 14.5 6.5 M6 13.5 Q9.5 9 13 10" stroke="#ddd" stroke-width="1.1" fill="none"/><circle cx="11.5" cy="12.3" r="1.2" fill="#fff"/></svg><svg class="a" style="left:1752px;top:1054px" width="17" height="16" viewBox="0 0 17 16"><path d="M1 5.5 L4 5.5 L8 2 L8 14 L4 10.5 L1 10.5 Z" stroke="#ddd" stroke-width="1.1" fill="none"/><path d="M10.5 5.5 Q12 8 10.5 10.5 M12.5 3.5 Q15.5 8 12.5 12.5" stroke="#ddd" stroke-width="1.1" fill="none"/><path d="M14.5 1.5 Q18.5 8 14.5 14.5" stroke="#888" stroke-width="0.8" fill="none"/></svg><div class="t" style="left:1779px;top:1055px;font-size:12px;color:#fff">РУС</div><div class="t" style="left:1825px;top:1047px;font-size:12px;color:#fff">15:21</div><div class="t" style="left:1811px;top:1064.5px;font-size:12px;color:#fff;letter-spacing:-0.2px">28.11.2020</div><svg class="a" style="left:1881px;top:1053px" width="17" height="18" viewBox="0 0 17 18"><path d="M1 1 L16 1 L16 13 L10 13 L8 15.5 L6 13 L1 13 Z" stroke="#eee" stroke-width="1.1" fill="none"/></svg><div class="a" style="left:1915px;top:1043px;width:1px;height:37px;background:#555"></div></body></html>
